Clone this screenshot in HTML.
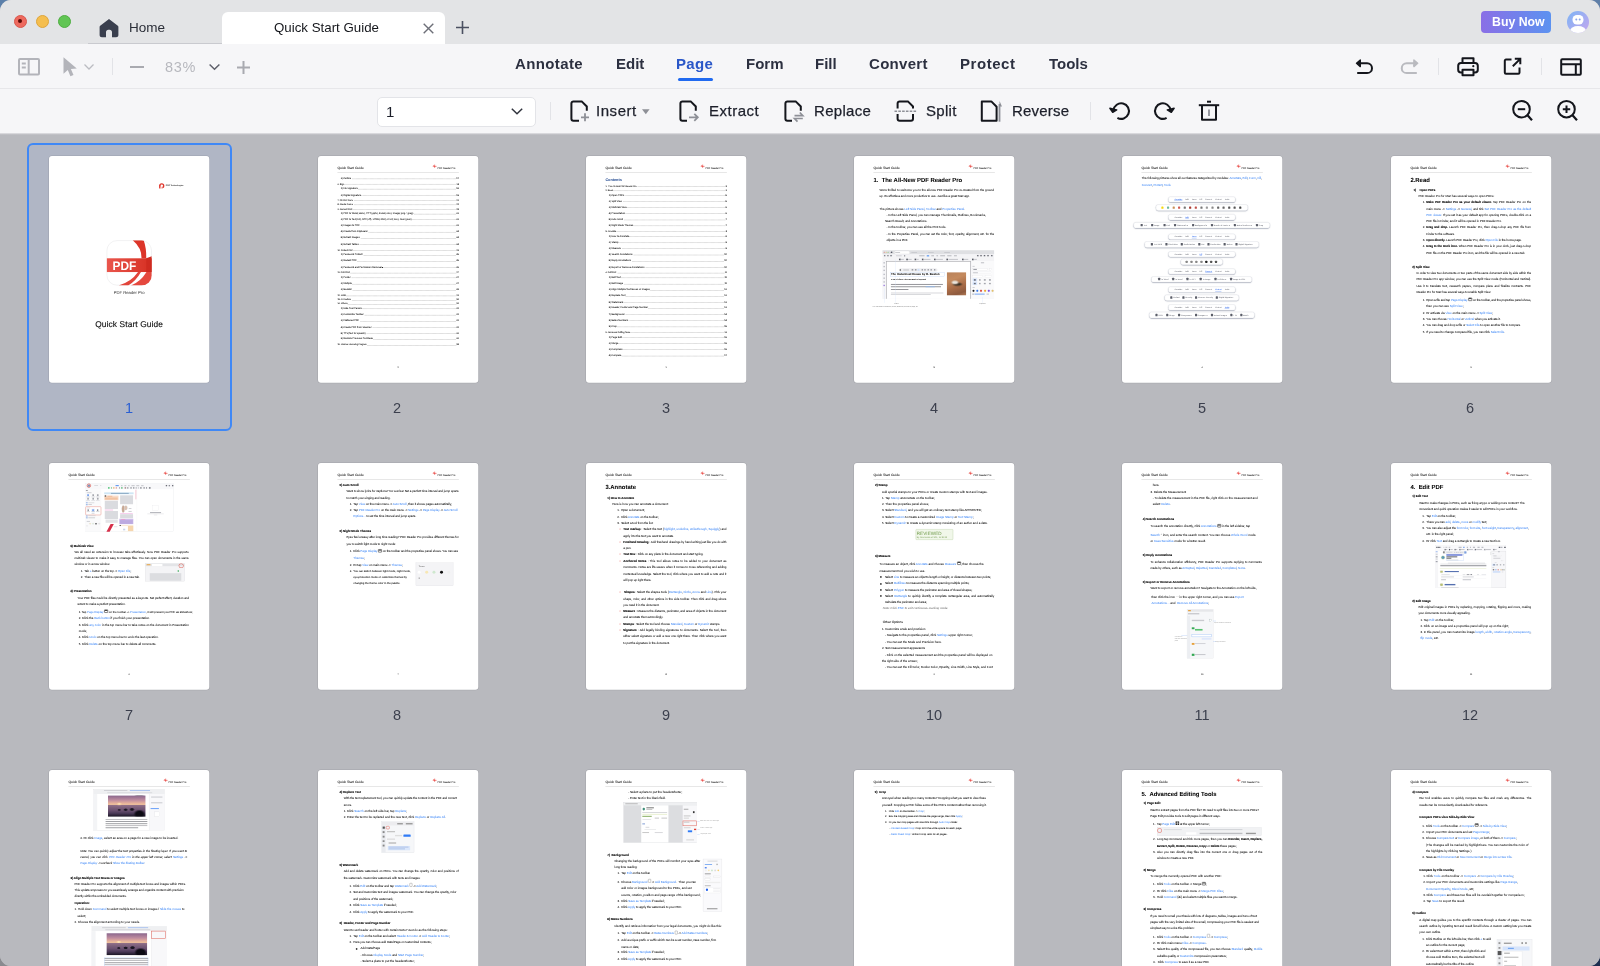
<!DOCTYPE html>
<html lang="en"><head><meta charset="utf-8"><title>Quick Start Guide - PDF Reader Pro</title>
<style>
*{box-sizing:border-box;margin:0;padding:0}
html,body{width:1600px;height:966px;overflow:hidden}
body{position:relative;background:#b8b9be;font-family:"Liberation Sans",sans-serif;color:#1e2230}
#win{position:absolute;left:0;top:0;width:1600px;height:966px;background:#b8b9be;border-radius:11px 11px 11px 11px;overflow:hidden}
.abs{position:absolute}
#titlebar{position:absolute;left:0;top:0;width:1600px;height:44px;background:#e3e4e6}
.tl{position:absolute;top:14.5px;width:13px;height:13px;border-radius:50%}
#tab{position:absolute;left:222px;top:12px;width:223px;height:32px;background:#fff;border-radius:6px 6px 0 0}
#tb1{position:absolute;left:0;top:44px;width:1600px;height:45px;background:#f6f6f8;border-bottom:1px solid #e7e7ea}
#tb2{position:absolute;left:0;top:89px;width:1600px;height:44px;background:#f6f6f8}
.t{position:absolute;white-space:nowrap;line-height:1;will-change:transform}
.menu{font-weight:bold;font-size:15px;color:#2c3040;top:55.5px}
.act{font-size:15px;color:#1c1f2a;top:103.5px;-webkit-text-stroke:.25px #1c1f2a}
.vd{position:absolute;width:1px;background:#e2e3e7}
svg{position:absolute;overflow:visible}
#content{position:absolute;left:0;top:133px;width:1600px;height:833px;background:#b8b9be;overflow:hidden}
#content:before{content:"";position:absolute;left:0;top:0;width:1600px;height:2px;background:linear-gradient(#e4e4e7,#b4b5ba)}
.num{position:absolute;width:160px;text-align:center;font-size:14.5px;color:#3b3f4d;line-height:1;will-change:transform}

.cell{position:absolute;width:160.3px;height:226.8px;will-change:transform}
.pg{position:absolute;left:0;top:0;width:595px;height:842px;transform:scale(.2694);transform-origin:0 0;background:#fff;border-radius:11px;overflow:hidden;font:11px/23.3px "Liberation Sans",sans-serif;color:#000;text-rendering:geometricPrecision;-webkit-text-stroke:.12px;box-shadow:0 0 0 2px rgba(90,92,100,.22)}
.pg *{position:absolute}
.pg b,.pg i,.pg a,.pg span.s{position:static}
.pg a{color:#4a8ff6}
.pg b,.pg .h2{-webkit-text-stroke:.4px}
.pg b a,.pg a b{-webkit-text-stroke:.4px #4a8ff6}
.hl{left:72px;top:37px;font-size:12.5px;color:#222;-webkit-text-stroke:.15px;line-height:12px;white-space:nowrap}
.hrr{right:85px;top:39px;font-size:9px;color:#222;-webkit-text-stroke:.15px;line-height:12px;white-space:nowrap}
.hic{right:154px;top:31px}
.rule{left:72px;top:61.5px;width:451px;height:1.8px;background:#a4a4a4}
.pn{left:0;width:595px;text-align:center;top:779px;font-size:8px;line-height:12px;color:#222}
.p{text-align:justify;white-space:normal;letter-spacing:-.16px}
.nw{white-space:nowrap}
.h1{font-weight:bold;font-size:22px;line-height:26px;white-space:nowrap;left:72px}
.h2{font-weight:bold;font-size:11px;white-space:nowrap}
.toc{display:flex;align-items:baseline;line-height:12px;white-space:nowrap}
.toc *{position:static}
.toc u{flex:1;text-decoration:none;border-bottom:1.2px dotted #222;margin:0 1px;height:9px}
.t1{font-size:8px;left:72px;width:451px}
.t2{font-size:9px;left:84px;width:439px}
.img{background:#f1f2f4;border:1px solid #d4d5d9}
.pill{background:#fff;border:1.2px solid #cfd1d8;border-radius:8px;box-shadow:0 2px 4px rgba(70,80,110,.5);display:flex;align-items:center;justify-content:space-evenly;font-size:7.3px;line-height:10px;color:#70737c;white-space:nowrap;padding:0 10px;-webkit-text-stroke:.1px}
.pill *{position:static}
.pg i.ic{display:inline-block;width:8px;height:9px;background:#5a5d68;border-radius:2px;margin-right:3px;vertical-align:-1.5px}
.pg .icd{display:inline-block;width:10px;height:13px;border:1.6px solid #444;border-radius:2px;position:relative;top:-3px}
.pg .icg{display:inline-block;width:13px;height:13px;position:relative;top:-3px;background:linear-gradient(#fff,#fff) 50% 0/2px 100% no-repeat,linear-gradient(#fff,#fff) 0 50%/100% 2px no-repeat,#222}
.pg .ico{display:inline-block;width:14px;height:12px;border:2px solid #222;border-radius:2px;position:relative;top:-3px;background:linear-gradient(#222,#222) 0 0/100% 3px no-repeat}
</style></head><body>
<div class="abs" style="left:0;top:0;width:20px;height:20px;background:#5c80aa"></div><div class="abs" style="right:0;top:0;width:20px;height:20px;background:#5f7fa8"></div><div class="abs" style="left:0;bottom:0;width:20px;height:20px;background:#898a8f"></div><div class="abs" style="right:0;bottom:0;width:20px;height:20px;background:linear-gradient(135deg,#6f7f9c,#1c2e50 60%)"></div>
<div id="win">
<div id="titlebar">
  <div class="tl" style="left:13.5px;background:#ee6a5f;border:.5px solid #d9574d"></div>
  <div class="abs" style="left:18px;top:19px;width:4px;height:4px;border-radius:50%;background:#5c0b06"></div>
  <div class="tl" style="left:35.7px;background:#f5be4f;border:.5px solid #dea53b"></div>
  <div class="tl" style="left:57.9px;background:#61c554;border:.5px solid #4fae42"></div>
  <div class="abs" style="left:88px;top:43px;width:134px;height:1px;background:#c9cacf"></div>
  <svg style="left:99px;top:19px" width="20" height="19" viewBox="0 0 20 19"><path d="M10 0 1.2 6.8c-.4.3-.6.7-.6 1.2V16c0 1.3 1 2.3 2.3 2.3H7V13c0-1.3 1-2.3 2.3-2.3h1.4c1.3 0 2.3 1 2.3 2.3v5.3h4.1c1.3 0 2.3-1 2.3-2.3V8c0-.5-.2-.9-.6-1.2Z" fill="#3a3f4e"/></svg>
  <div class="t" style="left:129.3px;top:20.7px;font-size:13.5px;color:#2b2e38">Home</div>
  <div id="tab"></div>
  <div class="t" style="left:273.7px;top:21.3px;font-size:13.3px;color:#15171c">Quick Start Guide</div>
  <svg style="left:423px;top:23px" width="11" height="11" viewBox="0 0 11 11"><path d="M.7.7l9.6 9.6M10.3.7.7 10.3" stroke="#6d6f78" stroke-width="1.4" fill="none"/></svg>
  <svg style="left:456px;top:21px" width="13" height="13" viewBox="0 0 13 13"><path d="M6.5 0v13M0 6.5h13" stroke="#4b5061" stroke-width="1.6" fill="none"/></svg>
  <div class="abs" style="left:1481px;top:11px;width:70px;height:22px;border-radius:4px;background:linear-gradient(90deg,#8a6fe6,#5c92f0)"></div>
  <div class="t" style="left:1491.7px;top:16.2px;font-size:12.3px;font-weight:bold;color:#fff">Buy Now</div>
  <svg style="left:1566.5px;top:11px" width="22" height="22" viewBox="0 0 22 22"><defs><linearGradient id="av" x1="0" y1="0" x2="1" y2="1"><stop offset="0" stop-color="#7db4f5"/><stop offset="1" stop-color="#c5a6ee"/></linearGradient><clipPath id="avc"><circle cx="11" cy="11" r="11"/></clipPath></defs><circle cx="11" cy="11" r="11" fill="url(#av)"/><g clip-path="url(#avc)"><rect x="5.5" y="4" width="11" height="9.5" rx="4.5" fill="#fff"/><ellipse cx="11" cy="20" rx="8" ry="5" fill="#fff"/><circle cx="9.3" cy="8.6" r="1" fill="#8aa5ee"/><circle cx="12.7" cy="8.6" r="1" fill="#8aa5ee"/></g></svg>
</div>
<div id="tb1">
  <!-- left tools -->
  <svg style="left:18px;top:14px" width="22" height="18" viewBox="0 0 22 18"><rect x="1" y="1" width="20" height="15.5" rx="1" fill="none" stroke="#b3b4ba" stroke-width="2"/><path d="M10.7 1v15.5" stroke="#b3b4ba" stroke-width="2"/><path d="M3.8 5.5h4M3.8 9.5h4" stroke="#b3b4ba" stroke-width="2"/></svg>
  <svg style="left:62.5px;top:13.3px" width="15" height="20" viewBox="0 0 15 20"><path d="M.5.3v16.4l4.3-3.6 2.6 6.2 3.1-1.3-2.6-6.1 5.9-.4Z" fill="#b3b4ba"/></svg>
  <svg style="left:84px;top:20px" width="10" height="6" viewBox="0 0 10 6"><path d="M.5.5 5 5 9.5.5" stroke="#bbbcc2" stroke-width="1.3" fill="none"/></svg>
  <div class="vd" style="left:112px;top:14px;height:17px"></div>
  <div class="abs" style="left:130px;top:21.8px;width:13.5px;height:2px;background:#a9aab0"></div>
  <div class="t" style="left:164.5px;top:16px;font-size:14.5px;letter-spacing:.7px;color:#b7b8be">83%</div>
  <svg style="left:209px;top:20px" width="11" height="6" viewBox="0 0 11 6"><path d="M.6.5 5.5 5.3 10.4.5" stroke="#5f616b" stroke-width="1.5" fill="none"/></svg>
  <svg style="left:236.5px;top:16.5px" width="13" height="13" viewBox="0 0 13 13"><path d="M6.5 0v13M0 6.5h13" stroke="#a9aab0" stroke-width="2" fill="none"/></svg>
  <!-- menu -->
  <div class="t menu" id="m1" style="left:514.5px;top:11.5px;letter-spacing:.38px">Annotate</div>
  <div class="t menu" id="m2" style="left:615.5px;top:11.5px">Edit</div>
  <div class="t menu" id="m3" style="left:676.3px;top:11.5px;color:#2a57c8;letter-spacing:.3px">Page</div>
  <div class="abs" style="left:677.5px;top:34px;width:35px;height:3px;border-radius:1.5px;background:#216af0"></div>
  <div class="t menu" id="m4" style="left:745.5px;top:11.5px">Form</div>
  <div class="t menu" id="m5" style="left:815px;top:11.5px">Fill</div>
  <div class="t menu" id="m6" style="left:868.5px;top:11.5px;letter-spacing:.3px">Convert</div>
  <div class="t menu" id="m7" style="left:960px;top:11.5px;letter-spacing:.55px">Protect</div>
  <div class="t menu" id="m8" style="left:1048.5px;top:11.5px">Tools</div>
  <!-- right tools -->
  <svg style="left:1355px;top:15px" width="19" height="16" viewBox="0 0 19 16"><path d="M2 4.3H12.1a4.9 4.9 0 0 1 0 9.8H2.2" stroke="#14161c" stroke-width="2" fill="none"/><path d="M5.3 1 1.5 4.3 5.3 7.6Z" fill="#14161c" stroke="#14161c" stroke-width="1.4" stroke-linejoin="round"/></svg>
  <svg style="left:1399.5px;top:15px" width="19" height="16" viewBox="0 0 19 16"><path d="M17 4.3H6.65a4.9 4.9 0 0 0 0 9.8H16.8" stroke="#b9babf" stroke-width="2" fill="none"/><path d="M13.9 1 17.7 4.3 13.9 7.6Z" fill="#b9babf" stroke="#b9babf" stroke-width="1.4" stroke-linejoin="round"/></svg>
  <div class="vd" style="left:1438px;top:14px;height:17px"></div>
  <svg style="left:1456.5px;top:13px" width="22" height="20" viewBox="0 0 22 20"><path d="M5.5 6V1.3h11V6" fill="none" stroke="#14161c" stroke-width="2" stroke-linejoin="round"/><rect x="1.2" y="6" width="19.6" height="9.5" rx="2.8" fill="none" stroke="#14161c" stroke-width="2"/><rect x="5.5" y="12.8" width="11" height="5.5" fill="#f6f6f8" stroke="#14161c" stroke-width="2" stroke-linejoin="round"/><circle cx="16.3" cy="9.2" r="1.1" fill="#14161c"/></svg>
  <svg style="left:1503px;top:13px" width="20" height="19" viewBox="0 0 20 19"><path d="M8.5 2.5H3a1.2 1.2 0 0 0-1.2 1.2V15.6a1.2 1.2 0 0 0 1.2 1.2H15.3a1.2 1.2 0 0 0 1.2-1.2V10.5" fill="none" stroke="#14161c" stroke-width="2"/><path d="M9.8 9.3 17 2.1M11.8 1.8h5.5v5.5" fill="none" stroke="#14161c" stroke-width="2"/></svg>
  <div class="vd" style="left:1541px;top:14px;height:17px"></div>
  <svg style="left:1560px;top:14px" width="22" height="18" viewBox="0 0 22 18"><rect x="1.2" y="1.2" width="19.6" height="15.6" rx="1" fill="none" stroke="#14161c" stroke-width="2"/><path d="M1.2 6.2h19.6M15.8 6.2v10.6" stroke="#14161c" stroke-width="2"/></svg>
</div>
<div id="tb2">
  <div class="abs" style="left:376.5px;top:7.5px;width:159px;height:30px;background:#fff;border:1px solid #e3e4e8;border-radius:5px"></div>
  <div class="t" style="left:386px;top:15px;font-size:15px;color:#1c1f2a">1</div>
  <svg style="left:511px;top:19px" width="12" height="7" viewBox="0 0 12 7"><path d="M.8.7 6 5.7 11.2.7" stroke="#30333d" stroke-width="1.5" fill="none"/></svg>
  <div class="vd" style="left:550px;top:13px;height:18px"></div>
  <!-- Insert -->
  <svg style="left:570px;top:11px" width="20" height="22" viewBox="0 0 20 22"><path d="M9 20.7H3.4a2 2 0 0 1-2-2V3.4a2 2 0 0 1 2-2h8.3l5.1 5.1v4.3" fill="none" stroke="#14161c" stroke-width="2"/><path d="M15 13.3v8M11 17.3h8" stroke="#8e9097" stroke-width="1.8"/></svg>
  <div class="t act" id="a1" style="left:595.7px;top:14px;letter-spacing:.55px">Insert</div>
  <svg style="left:642px;top:20px" width="8" height="6" viewBox="0 0 8 6"><path d="M0 .3h7.6L3.8 5.3Z" fill="#8e9097"/></svg>
  <!-- Extract -->
  <svg style="left:679px;top:11px" width="20" height="22" viewBox="0 0 20 22"><path d="M8 20.7H3.4a2 2 0 0 1-2-2V3.4a2 2 0 0 1 2-2h8.3l5.1 5.1v4.3" fill="none" stroke="#14161c" stroke-width="2"/><path d="M10 17.3h8.5M15.3 13.8l3.5 3.5-3.5 3.5" stroke="#8e9097" stroke-width="1.8" fill="none"/></svg>
  <div class="t act" id="a2" style="left:708.7px;top:14px;letter-spacing:.5px">Extract</div>
  <!-- Replace -->
  <svg style="left:784px;top:11px" width="20" height="22" viewBox="0 0 20 22"><path d="M8 20.7H3.4a2 2 0 0 1-2-2V3.4a2 2 0 0 1 2-2h8.3l5.1 5.1v4.3" fill="none" stroke="#14161c" stroke-width="2"/><path d="M10.5 15.7h8.3l-3-3.2M18.8 18.5h-8.3l3 3.2" stroke="#8e9097" stroke-width="1.7" fill="none"/></svg>
  <div class="t act" id="a3" style="left:813.7px;top:14px;letter-spacing:.3px">Replace</div>
  <!-- Split -->
  <svg style="left:894px;top:11px" width="23" height="22" viewBox="0 0 23 22"><path d="M3.6 8.5V3.4a2 2 0 0 1 2-2h8.3l5.1 5.1v2" fill="none" stroke="#14161c" stroke-width="2"/><path d="M3.6 14v4.7a2 2 0 0 0 2 2H17a2 2 0 0 0 2-2V14" fill="none" stroke="#14161c" stroke-width="2"/><path d="M.5 11.2h22" stroke="#8e9097" stroke-width="1.6" stroke-dasharray="2.6 1.2"/></svg>
  <div class="t act" id="a4" style="left:926px;top:14px;letter-spacing:.3px">Split</div>
  <!-- Reverse -->
  <svg style="left:980px;top:11px" width="23" height="22" viewBox="0 0 23 22"><path d="M1.8 1.4h9.5l5.3 5.3v14H1.8Z" fill="none" stroke="#14161c" stroke-width="2" stroke-linejoin="round"/><path d="M19.5 21.7V4" stroke="#8e9097" stroke-width="1.8"/><path d="M19.5 1 22 6.5h-2.5Z" fill="#8e9097"/></svg>
  <div class="t act" id="a5" style="left:1012.3px;top:14px;letter-spacing:.2px">Reverse</div>
  <div class="vd" style="left:1090px;top:13px;height:18px"></div>
  <!-- rotate left -->
  <svg style="left:1104px;top:9px" width="32" height="26" viewBox="0 0 32 26"><path d="M9.49 12.29A7.75 7.75 0 1 1 13.4 19.85" fill="none" stroke="#14161c" stroke-width="2.1"/><path d="M5.9 10.3 8.7 14.3 12.7 11.9Z" fill="#14161c" stroke="#14161c" stroke-width="1.5" stroke-linejoin="round"/></svg>
  <svg style="left:1148.2px;top:9px" width="32" height="26" viewBox="0 0 32 26"><g transform="translate(32 0) scale(-1 1)"><path d="M9.49 12.29A7.75 7.75 0 1 1 13.4 19.85" fill="none" stroke="#14161c" stroke-width="2.1"/><path d="M5.9 10.3 8.7 14.3 12.7 11.9Z" fill="#14161c" stroke="#14161c" stroke-width="1.5" stroke-linejoin="round"/></g></svg>
  <!-- trash -->
  <svg style="left:1198px;top:10px" width="22" height="23" viewBox="0 0 22 23"><path d="M.8 6.2h20.4" stroke="#14161c" stroke-width="2"/><path d="M9 2.7h4" stroke="#14161c" stroke-width="2"/><path d="M4 6.2v14.5h14V6.2" fill="none" stroke="#14161c" stroke-width="2" stroke-linejoin="round"/><path d="M11 10.5v6.5" stroke="#8e9097" stroke-width="1.8"/></svg>
  <!-- zoom out / in -->
  <svg style="left:1511px;top:10px" width="22" height="23" viewBox="0 0 22 23"><circle cx="10.5" cy="10.2" r="8.3" fill="none" stroke="#14161c" stroke-width="2"/><path d="M16.5 16.2l4.5 5" stroke="#14161c" stroke-width="2.2"/><path d="M6.8 10.2h7.4" stroke="#14161c" stroke-width="2"/></svg>
  <svg style="left:1555.5px;top:10px" width="22" height="23" viewBox="0 0 22 23"><circle cx="10.5" cy="10.2" r="8.3" fill="none" stroke="#14161c" stroke-width="2"/><path d="M16.5 16.2l4.5 5" stroke="#14161c" stroke-width="2.2"/><path d="M6.8 10.2h7.4M10.5 6.5v7.4" stroke="#14161c" stroke-width="2"/></svg>
</div>
<div id="content">
<div style="position:absolute;left:27px;top:9.5px;width:205px;height:288px;border:2px solid #3f88f6;border-radius:6px;background:#b0b6c5"></div>
<div class="cell" style="left:49.3px;top:22.7px"><div class="pg"><svg style="left:407px;top:101px" width="23" height="20" viewBox="0 0 23 20"><circle cx="11.5" cy="9.5" r="7.3" fill="none" stroke="#e0362c" stroke-width="5"/><rect x="0" y="11" width="9" height="9" fill="#fff"/><rect x="1.7" y="8" width="5" height="11.5" fill="#e0362c"/><rect x="9" y="15" width="5" height="5" fill="#fff"/></svg><div class="nw" style="left:433.5px;top:105px;font-size:7.6px;line-height:12px;font-weight:bold;color:#333;-webkit-text-stroke:0">PDF Technologies</div><svg style="left:213.8px;top:313.3px" width="167.5" height="167.5" viewBox="0 0 640 640"><defs><clipPath id="lg"><rect x="0" y="0" width="640" height="640" rx="145"/></clipPath><linearGradient id="bd" x1="0" y1="0" x2="1" y2="0"><stop offset="0" stop-color="#ea564d"/><stop offset="1" stop-color="#d62f22"/></linearGradient></defs><rect x="4" y="4" width="632" height="632" rx="142" fill="#fff" stroke="#e7e7e9" stroke-width="8"/><g clip-path="url(#lg)"><path d="M370 0Q500 110 495 258L562 258Q565 110 525 0Z" fill="#dc3529"/><rect x="0" y="255" width="640" height="195" fill="url(#bd)"/><path d="M562 255 640 225V450H562Z" fill="#cf2b20"/><path d="M445 450H487Q410 585 305 640H170Q350 590 445 450Z" fill="#e2443a"/><path d="M565 450H640V540Q625 640 500 640H345Q480 590 565 450Z" fill="#e5483e"/></g><text x="84" y="415" font-family="Liberation Sans, sans-serif" font-weight="bold" font-size="176" fill="#fff" textLength="336" lengthAdjust="spacingAndGlyphs">PDF</text></svg><div class="nw" style="left:0;width:595px;text-align:center;top:501px;font-size:15.5px;line-height:16px;color:#333;-webkit-text-stroke:0">PDF Reader Pro</div><div class="nw" style="left:0;width:595px;text-align:center;top:608px;font-size:31px;line-height:36px;color:#111;letter-spacing:.45px;-webkit-text-stroke:.5px #111">Quick Start Guide</div></div></div>
<div class="num" style="left:49.3px;margin-left:-.2px;top:267.7px;color:#2a5fd3">1</div>
<div class="cell" style="left:317.55px;top:22.7px"><div class="pg"><div class="hl">Quick Start Guide</div><svg class="hic" width="16" height="16" viewBox="0 0 16 16"><path d="M1 7.5h14M8 1v12" stroke="#e5322d" stroke-width="2.2" fill="none"/><path d="M8 7.5 2 3" stroke="#e5322d" stroke-width="1.5"/></svg><div class="hrr">PDF Reader Pro</div><div class="rule"></div><div class="pn">2</div><div class="toc t2" style="top:75.5px"><span>3) Outline</span><u></u><span>17</span></div><div class="toc t1" style="top:96.7px"><span>6. Sign</span><u></u><span>18</span></div><div class="toc t2" style="top:115.1px"><span>1) Ink Signature</span><u></u><span>18</span></div><div class="toc t2" style="top:138.1px"><span>2) Digital Signature</span><u></u><span>19</span></div><div class="toc t1" style="top:158.4px"><span>7. Fill PDF Form</span><u></u><span>21</span></div><div class="toc t1" style="top:173.1px"><span>8. Create Forms</span><u></u><span>22</span></div><div class="toc t1" style="top:190.6px"><span>9. Convert PDF</span><u></u><span>23</span></div><div class="toc t2" style="top:207.2px"><span>1) PDF to Word(.docx), PPT(.pptx), Excel(.xlsx), Image(.png / .jpeg)</span><u></u><span>23</span></div><div class="toc t2" style="top:228.4px"><span>2) PDF to Text(.txt), RTF(.rtf), HTML(.html), CSV(.csv), Json(.json)</span><u></u><span>23</span></div><div class="toc t2" style="top:251.4px"><span>3) Images to PDF</span><u></u><span>23</span></div><div class="toc t2" style="top:274.4px"><span>4) Create from Clipboard</span><u></u><span>24</span></div><div class="toc t2" style="top:297.4px"><span>5) Extract Images</span><u></u><span>24</span></div><div class="toc t2" style="top:320.5px"><span>6) Extract Tables</span><u></u><span>24</span></div><div class="toc t1" style="top:341.6px"><span>10. Protect PDF</span><u></u><span>25</span></div><div class="toc t2" style="top:360.1px"><span>1) Password Protect</span><u></u><span>25</span></div><div class="toc t2" style="top:382.2px"><span>2) Redact PDF</span><u></u><span>25</span></div><div class="toc t2" style="top:405.2px"><span>3) Password and Permission Removal</span><u></u><span>26</span></div><div class="toc t1" style="top:426.4px"><span>11. Print PDF</span><u></u><span>27</span></div><div class="toc t2" style="top:443.9px"><span>1) Poster</span><u></u><span>27</span></div><div class="toc t2" style="top:466.9px"><span>2) Multiple</span><u></u><span>27</span></div><div class="toc t2" style="top:489.9px"><span>3) Booklet</span><u></u><span>28</span></div><div class="toc t1" style="top:511.1px"><span>12. OCR</span><u></u><span>29</span></div><div class="toc t1" style="top:526.8px"><span>13. AI Feature</span><u></u><span>30</span></div><div class="toc t1" style="top:542.4px"><span>14. Others</span><u></u><span>31</span></div><div class="toc t2" style="top:559.0px"><span>1) Hide Tool Panels</span><u></u><span>31</span></div><div class="toc t2" style="top:582.0px"><span>2) Customize Toolbar</span><u></u><span>31</span></div><div class="toc t2" style="top:605.0px"><span>3) Flattened PDF</span><u></u><span>31</span></div><div class="toc t2" style="top:628.1px"><span>4) Create PDF from Scanner</span><u></u><span>31</span></div><div class="toc t2" style="top:651.1px"><span>5) TTS(Text to Speech)</span><u></u><span>32</span></div><div class="toc t2" style="top:672.3px"><span>6) Restore Previous Purchase</span><u></u><span>32</span></div><div class="toc t1" style="top:694.4px"><span>15. Volume Licensing Program</span><u></u><span>33</span></div></div></div>
<div class="num" style="left:317.55px;margin-left:-.2px;top:267.7px;color:#3b3f4d">2</div>
<div class="cell" style="left:585.8px;top:22.7px"><div class="pg"><div class="hl">Quick Start Guide</div><svg class="hic" width="16" height="16" viewBox="0 0 16 16"><path d="M1 7.5h14M8 1v12" stroke="#e5322d" stroke-width="2.2" fill="none"/><path d="M8 7.5 2 3" stroke="#e5322d" stroke-width="1.5"/></svg><div class="hrr">PDF Reader Pro</div><div class="rule"></div><div class="pn">1</div><div class="nw" style="left:72px;top:79.4px;font-size:14px;line-height:18px;color:#2f5597;font-weight:bold">Contents</div><div class="toc t1" style="top:105.9px"><span>1.&nbsp; The All-New PDF Reader Pro</span><u></u><span>3</span></div><div class="toc t1" style="top:120.6px"><span>2. Read</span><u></u><span>5</span></div><div class="toc t2" style="top:139.0px"><span>1) Open PDFs</span><u></u><span>5</span></div><div class="toc t2" style="top:161.1px"><span>2) Split View</span><u></u><span>5</span></div><div class="toc t2" style="top:184.1px"><span>3) Multi-tab View</span><u></u><span>6</span></div><div class="toc t2" style="top:206.3px"><span>4) Presentation</span><u></u><span>6</span></div><div class="toc t2" style="top:229.3px"><span>5) Auto Scroll</span><u></u><span>7</span></div><div class="toc t2" style="top:251.4px"><span>6) Night Mode Themes</span><u></u><span>7</span></div><div class="toc t1" style="top:272.6px"><span>3. Annotate</span><u></u><span>8</span></div><div class="toc t2" style="top:291.0px"><span>1) How to Annotate</span><u></u><span>8</span></div><div class="toc t2" style="top:314.0px"><span>2) Stamp</span><u></u><span>9</span></div><div class="toc t2" style="top:336.1px"><span>3) Measure</span><u></u><span>9</span></div><div class="toc t2" style="top:359.1px"><span>4) Search Annotations</span><u></u><span>10</span></div><div class="toc t2" style="top:382.2px"><span>5) Reply Annotations</span><u></u><span>10</span></div><div class="toc t2" style="top:405.2px"><span>6) Export or Remove Annotations</span><u></u><span>10</span></div><div class="toc t1" style="top:426.4px"><span>4. Edit PDF</span><u></u><span>11</span></div><div class="toc t2" style="top:443.9px"><span>1) Edit Text</span><u></u><span>11</span></div><div class="toc t2" style="top:466.9px"><span>2) Edit Image</span><u></u><span>11</span></div><div class="toc t2" style="top:489.9px"><span>3) Align Multiple Text Boxes or Images</span><u></u><span>12</span></div><div class="toc t2" style="top:512.0px"><span>4) Replace Text</span><u></u><span>12</span></div><div class="toc t2" style="top:535.0px"><span>5) Watermark</span><u></u><span>13</span></div><div class="toc t2" style="top:557.2px"><span>6) Header, Footer and Page Number</span><u></u><span>13</span></div><div class="toc t2" style="top:580.2px"><span>7) Background</span><u></u><span>14</span></div><div class="toc t2" style="top:603.2px"><span>8) Bates Numbers</span><u></u><span>14</span></div><div class="toc t2" style="top:626.2px"><span>9) Crop</span><u></u><span>15</span></div><div class="toc t1" style="top:647.4px"><span>5. Advanced Editing Tools</span><u></u><span>16</span></div><div class="toc t2" style="top:664.9px"><span>1) Page Edit</span><u></u><span>16</span></div><div class="toc t2" style="top:687.9px"><span>2) Merge</span><u></u><span>16</span></div><div class="toc t2" style="top:711.0px"><span>3) Compress</span><u></u><span>16</span></div><div class="toc t2" style="top:734.0px"><span>4) Compare</span><u></u><span>17</span></div></div></div>
<div class="num" style="left:585.8px;margin-left:-.2px;top:267.7px;color:#3b3f4d">3</div>
<div class="cell" style="left:854.05px;top:22.7px"><div class="pg"><div class="hl">Quick Start Guide</div><svg class="hic" width="16" height="16" viewBox="0 0 16 16"><path d="M1 7.5h14M8 1v12" stroke="#e5322d" stroke-width="2.2" fill="none"/><path d="M8 7.5 2 3" stroke="#e5322d" stroke-width="1.5"/></svg><div class="hrr">PDF Reader Pro</div><div class="rule"></div><div class="pn">3</div><div class="h1" style="top:76.3px">1.&nbsp; The All-New PDF Reader Pro</div><div class="p" style="left:94.5px;top:114.5px;width:425.5px;">We're thrilled to welcome you to the all-new PDF Reader Pro re-created from the ground up. It's effortless and more productive to use. Just like a great Mac app.</div><div class="nw" style="left:94.5px;top:185.4px;">The picture shows <a>Left Side Panel</a>, <a>Toolbar</a> and <a>Properties Panel</a>.</div><div class="nw" style="left:120.3px;top:208.5px;">- In the Left Side Panel, you can manage Thumbnails, Outlines, Bookmarks,</div><div class="nw" style="left:114.8px;top:231.5px;">Search Result, and Annotations.</div><div class="nw" style="left:120.3px;top:254.5px;">- In the toolbar, you can use all the PDF tools.</div><div class="p" style="left:120.3px;top:277.5px;width:399.7px;">- In the Properties Panel, you can set the color, font, opacity, alignment, etc. for the objects in a PDF.</div><div class="img" style="left:105.7px;top:350.3px;width:414.0px;height:180.0px;background:#f4f4f6;border:0"></div><div class="img" style="left:105.7px;top:350.3px;width:414.0px;height:14.2px;background:#dfe0e3;border:0"></div><div class="img" style="left:109.7px;top:354.8px;width:5.4px;height:5.4px;background:#ee6a5f;border-radius:50%"></div><div class="img" style="left:116.9px;top:354.8px;width:5.4px;height:5.4px;background:#f5be4f;border-radius:50%"></div><div class="img" style="left:124.1px;top:354.8px;width:5.4px;height:5.4px;background:#61c554;border-radius:50%"></div><div class="img" style="left:135.9px;top:354.2px;width:6.9px;height:7.2px;background:#3a3f4e;border-radius:3px"></div><div class="img" style="left:149.5px;top:352.4px;width:57.3px;height:12.1px;background:#fff;border-radius:5px 5px 0 0"></div><div class="img" style="left:153.1px;top:356.9px;width:17.5px;height:2.7px;background:#c2c3c8;border:0"></div><div class="img" style="left:212.8px;top:356.6px;width:21.1px;height:3.0px;background:#c5c6cb;border:0"></div><div class="img" style="left:274.6px;top:356.6px;width:21.1px;height:3.0px;background:#c5c6cb;border:0"></div><div class="img" style="left:334.9px;top:356.6px;width:21.1px;height:3.0px;background:#c5c6cb;border:0"></div><div class="img" style="left:110.9px;top:366.9px;width:6.6px;height:6.6px;background:#5a5d68;border-radius:2px"></div><div class="img" style="left:122.9px;top:366.9px;width:6.6px;height:6.6px;background:#5a5d68;border-radius:2px"></div><div class="img" style="left:134.4px;top:366.9px;width:6.6px;height:6.6px;background:#5a5d68;border-radius:2px"></div><div class="img" style="left:155.5px;top:368.7px;width:21.1px;height:3.3px;background:#c9cacf;border:0"></div><div class="img" style="left:185.7px;top:367.5px;width:4.2px;height:5.4px;background:#8a8c94;border:0"></div><div class="img" style="left:242.3px;top:368.7px;width:20.2px;height:3.6px;background:#a9abb2;border:0"></div><div class="img" style="left:286.7px;top:368.7px;width:10.6px;height:3.6px;background:#a9abb2;border:0"></div><div class="img" style="left:306.3px;top:368.7px;width:6.0px;height:3.6px;background:#a9abb2;border:0"></div><div class="img" style="left:319.8px;top:368.7px;width:18.1px;height:3.6px;background:#a9abb2;border:0"></div><div class="img" style="left:345.5px;top:368.7px;width:16.6px;height:3.6px;background:#a9abb2;border:0"></div><div class="img" style="left:371.1px;top:368.7px;width:10.6px;height:3.6px;background:#a9abb2;border:0"></div><div class="img" style="left:269.5px;top:368.1px;width:9.6px;height:4.8px;background:#6aa0f0;border:0"></div><div class="img" style="left:455.5px;top:366.9px;width:7.2px;height:6.6px;background:#4a4d58;border-radius:2px"></div><div class="img" style="left:467.6px;top:366.9px;width:7.2px;height:6.6px;background:#4a4d58;border-radius:2px"></div><div class="img" style="left:481.2px;top:366.9px;width:7.2px;height:6.6px;background:#4a4d58;border-radius:2px"></div><div class="img" style="left:493.8px;top:366.9px;width:7.2px;height:6.6px;background:#4a4d58;border-radius:2px"></div><div class="img" style="left:507.7px;top:366.9px;width:7.2px;height:6.6px;background:#4a4d58;border-radius:2px"></div><div class="img" style="left:167.0px;top:380.5px;width:6.0px;height:6.0px;background:#555862;border:0"></div><div class="img" style="left:174.2px;top:382.0px;width:10.9px;height:3.3px;background:#b9bac0;border:0"></div><div class="img" style="left:194.1px;top:380.5px;width:6.0px;height:6.0px;background:#555862;border:0"></div><div class="img" style="left:201.3px;top:382.0px;width:13.0px;height:3.3px;background:#b9bac0;border:0"></div><div class="img" style="left:224.9px;top:380.5px;width:6.0px;height:6.0px;background:#555862;border:0"></div><div class="img" style="left:232.1px;top:382.0px;width:7.8px;height:3.3px;background:#b9bac0;border:0"></div><div class="img" style="left:252.0px;top:380.5px;width:6.0px;height:6.0px;background:#555862;border:0"></div><div class="img" style="left:259.2px;top:382.0px;width:24.4px;height:3.3px;background:#b9bac0;border:0"></div><div class="img" style="left:296.6px;top:380.5px;width:6.0px;height:6.0px;background:#555862;border:0"></div><div class="img" style="left:303.9px;top:382.0px;width:26.5px;height:3.3px;background:#b9bac0;border:0"></div><div class="img" style="left:343.4px;top:380.5px;width:6.0px;height:6.0px;background:#555862;border:0"></div><div class="img" style="left:350.6px;top:382.0px;width:35.6px;height:3.3px;background:#b9bac0;border:0"></div><div class="img" style="left:400.6px;top:380.5px;width:6.0px;height:6.0px;background:#555862;border:0"></div><div class="img" style="left:407.9px;top:382.0px;width:16.0px;height:3.3px;background:#b9bac0;border:0"></div><div class="img" style="left:438.3px;top:380.5px;width:6.0px;height:6.0px;background:#555862;border:0"></div><div class="img" style="left:445.6px;top:382.0px;width:10.9px;height:3.3px;background:#b9bac0;border:0"></div><div class="img" style="left:105.7px;top:389.5px;width:13.6px;height:140.8px;background:#f6f6f8;border:0"></div><div class="img" style="left:109.1px;top:394.0px;width:6.0px;height:4.8px;background:#c0c2c9;border:0"></div><div class="img" style="left:109.1px;top:408.2px;width:6.0px;height:4.8px;background:#c0c2c9;border:0"></div><div class="img" style="left:109.1px;top:422.4px;width:6.0px;height:4.8px;background:#c0c2c9;border:0"></div><div class="img" style="left:109.1px;top:436.8px;width:6.0px;height:4.8px;background:#c0c2c9;border:0"></div><div class="img" style="left:109.1px;top:451.0px;width:6.0px;height:4.8px;background:#c0c2c9;border:0"></div><div class="img" style="left:109.1px;top:464.9px;width:6.0px;height:4.8px;background:#c0c2c9;border:0"></div><div class="img" style="left:109.1px;top:477.6px;width:6.0px;height:5.4px;background:#a78be0;border:0"></div><div class="img" style="left:119.3px;top:390.4px;width:314.2px;height:139.9px;background:#fff;border:2px solid #9a9ba0;border-bottom:0"></div><div class="img" style="left:435.9px;top:389.5px;width:83.8px;height:140.8px;background:#fafafb;border:0"></div><div class="img" style="left:167.6px;top:417.5px;width:141.7px;height:10.3px;background:#f3f3f5;border-radius:4px"></div><div class="img" style="left:169.4px;top:419.7px;width:6.0px;height:6.0px;background:#111;border-radius:50%"></div><div class="img" style="left:182.6px;top:421.2px;width:21.1px;height:3.6px;background:#c5c6cb;border:0"></div><div class="img" style="left:214.3px;top:420.3px;width:5.4px;height:5.1px;background:#8f9199;border:0"></div><div class="img" style="left:226.4px;top:420.3px;width:5.4px;height:5.1px;background:#8f9199;border:0"></div><div class="img" style="left:250.5px;top:420.3px;width:5.4px;height:5.1px;background:#8f9199;border:0"></div><div class="img" style="left:261.0px;top:420.3px;width:5.4px;height:5.1px;background:#8f9199;border:0"></div><div class="img" style="left:273.1px;top:420.3px;width:5.4px;height:5.1px;background:#8f9199;border:0"></div><div class="img" style="left:283.7px;top:420.3px;width:5.4px;height:5.1px;background:#8f9199;border:0"></div><div class="img" style="left:296.6px;top:420.3px;width:5.4px;height:5.1px;background:#8f9199;border:0"></div><div class="img" style="left:236.3px;top:419.1px;width:7.2px;height:7.5px;background:#cfe0fb;border:0"></div><div class="img" style="left:135.9px;top:431.7px;width:199.9px;height:17.2px;background:none;border:1px solid #a9c6f5"></div><div class="nw" style="left:137.4px;top:428.5px;font-weight:bold;font-size:10.7px;">The Outermost House by H. Beston</div><div class="nw" style="left:137.4px;top:447.5px;font-weight:bold;font-size:5.8px;">A Year of Life On The Great Beach of Cape Cod</div><div class="img" style="left:137.4px;top:474.8px;width:193.0px;height:3.0px;background:#7d7e84;border:0"></div><div class="img" style="left:137.4px;top:483.9px;width:185.4px;height:3.0px;background:#7d7e84;border:0"></div><div class="img" style="left:137.4px;top:493.5px;width:64.8px;height:3.0px;background:#7d7e84;border:0"></div><div class="img" style="left:137.4px;top:507.1px;width:194.5px;height:3.0px;background:#cfd0d4;border:0"></div><div class="img" style="left:137.4px;top:512.5px;width:147.8px;height:3.0px;background:#cfd0d4;border:0"></div><div class="img" style="left:265.6px;top:483.6px;width:34.7px;height:3.6px;background:#8db8f0;border:0"></div><div class="img" style="left:344.9px;top:431.7px;width:71.5px;height:85.3px;background:radial-gradient(ellipse 22% 10% at 42% 44%,#e9e4dc 0,#e9e4dc 50%,rgba(233,228,220,0) 100%),radial-gradient(ellipse 30% 9% at 55% 52%,#3f3326 0,#3f3326 50%,rgba(63,51,38,0) 100%),linear-gradient(160deg,#b9825a,#c48a5e 30%,#a96c47 60%,#8e5a3e 85%,#b07a55);border:0"></div><div class="img" style="left:470.6px;top:394.9px;width:12.1px;height:3.0px;background:#aeb0b7;border:0"></div><div class="img" style="left:439.5px;top:407.6px;width:8.4px;height:3.0px;background:#c5c6cb;border:0"></div><div class="img" style="left:439.5px;top:416.6px;width:55.2px;height:9.0px;background:#fff;border:1px solid #dcdde1"></div><div class="img" style="left:442.6px;top:419.4px;width:13.0px;height:3.6px;background:#9a9ca4;border:0"></div><div class="img" style="left:502.3px;top:416.6px;width:9.6px;height:9.0px;background:#fff;border:1px solid #dcdde1"></div><div class="img" style="left:439.5px;top:430.2px;width:72.4px;height:6.6px;background:#fff;border:1px solid #e3e4e8"></div><div class="img" style="left:442.0px;top:432.0px;width:18.1px;height:3.0px;background:#b9bac0;border:0"></div><div class="img" style="left:439.5px;top:443.8px;width:38.6px;height:7.5px;background:#fff;border:1px solid #e3e4e8"></div><div class="img" style="left:485.7px;top:443.8px;width:26.2px;height:7.5px;background:#fff;border:1px solid #e3e4e8"></div><div class="img" style="left:439.5px;top:454.3px;width:17.5px;height:11.5px;background:#d6e4fb;border:0"></div><div class="img" style="left:445.0px;top:457.4px;width:6.6px;height:5.4px;background:#6b6e78;border:0"></div><div class="img" style="left:463.7px;top:457.4px;width:6.6px;height:5.4px;background:#a5a7ae;border:0"></div><div class="img" style="left:482.4px;top:457.4px;width:6.6px;height:5.4px;background:#a5a7ae;border:0"></div><div class="img" style="left:501.1px;top:457.4px;width:6.6px;height:5.4px;background:#a5a7ae;border:0"></div><div class="img" style="left:439.5px;top:467.6px;width:17.5px;height:11.5px;background:#d6e4fb;border:0"></div><div class="img" style="left:445.0px;top:470.6px;width:6.6px;height:5.4px;background:#6b6e78;border:0"></div><div class="img" style="left:463.7px;top:470.6px;width:6.6px;height:5.4px;background:#a5a7ae;border:0"></div><div class="img" style="left:482.4px;top:470.6px;width:6.6px;height:5.4px;background:#a5a7ae;border:0"></div><div class="img" style="left:501.1px;top:470.6px;width:6.6px;height:5.4px;background:#a5a7ae;border:0"></div><div class="img" style="left:439.5px;top:486.9px;width:8.4px;height:3.0px;background:#c5c6cb;border:0"></div><div class="img" style="left:438.9px;top:495.9px;width:9.0px;height:9.0px;background:#111;border-radius:50%"></div><div class="img" style="left:453.1px;top:495.9px;width:9.0px;height:9.0px;background:#1f6bf0;border-radius:50%"></div><div class="img" style="left:467.3px;top:495.9px;width:9.0px;height:9.0px;background:#e0281e;border-radius:50%"></div><div class="img" style="left:481.5px;top:495.9px;width:9.0px;height:9.0px;background:#f59e0b;border-radius:50%"></div><div class="img" style="left:495.6px;top:495.9px;width:9.0px;height:9.0px;background:#6b32e8;border-radius:50%"></div><div class="img" style="left:509.8px;top:495.9px;width:9.0px;height:9.0px;background:#e8c060;border-radius:50%"></div><div class="img" style="left:438.9px;top:510.4px;width:6.0px;height:6.0px;background:#c5c6cb;border:0"></div><div class="img" style="left:447.4px;top:510.4px;width:37.4px;height:6.0px;background:#a9c6f5;border:0"></div><div class="img" style="left:491.7px;top:510.4px;width:9.0px;height:6.0px;background:#d5d6da;border:0"></div><div class="img" style="left:111.8px;top:490.5px;width:0.9px;height:54.9px;background:#d3e2fa;border:0"></div><div class="img" style="left:153.4px;top:385.0px;width:0.9px;height:160.4px;background:#d3e2fa;border:0"></div><div class="img" style="left:475.7px;top:523.1px;width:0.9px;height:22.3px;background:#d3e2fa;border:0"></div><div class="nw" style="left:148.0px;top:536.5px;font-size:5.5px;color:#666;-webkit-text-stroke:0;">Toolbar</div><div class="nw" style="left:464.0px;top:536.5px;font-size:5.5px;color:#666;-webkit-text-stroke:0;">Properties</div><div class="nw" style="left:69.6px;top:547.3px;font-size:5.3px;color:#666;-webkit-text-stroke:0;">Left Side Panel / Thumbnails, Outline, Bookmark, Annotation, Page, etc</div></div></div>
<div class="num" style="left:854.05px;margin-left:-.2px;top:267.7px;color:#3b3f4d">4</div>
<div class="cell" style="left:1122.3px;top:22.7px"><div class="pg"><div class="hl">Quick Start Guide</div><svg class="hic" width="16" height="16" viewBox="0 0 16 16"><path d="M1 7.5h14M8 1v12" stroke="#e5322d" stroke-width="2.2" fill="none"/><path d="M8 7.5 2 3" stroke="#e5322d" stroke-width="1.5"/></svg><div class="hrr">PDF Reader Pro</div><div class="rule"></div><div class="pn">4</div><div class="p" style="left:73.3px;top:73.1px;width:445.8px;">The following pictures show all our features categorized by modules: <a>Annotate</a>, <a>Edit</a>, <a>Form</a>, <a>Fill</a>, <a>Convert</a>, <a>Protect</a>, <a>Tools</a></div><div class="pill" style="left:171.9px;top:151.0px;width:248.7px;height:21.2px;"><span class="s" style="color:#2563eb;border-bottom:1.5px solid #2563eb">Annotate</span><span class="s">Edit</span><span class="s">Form</span><span class="s">Fill</span><span class="s">Convert</span><span class="s">Protect</span><span class="s">Tools</span></div><div class="pill" style="left:125.8px;top:179.6px;width:340.8px;height:23.0px;"><i class="ic" style="background:#f5d90a;width:8px;height:9px"></i><i class="ic" style="background:#6fb8a0;width:8px;height:9px"></i><i class="ic" style="background:#c89058;width:8px;height:9px"></i><i class="ic" style="background:#d05a50;width:8px;height:9px"></i><i class="ic" style="background:#777;width:8px;height:9px"></i><i class="ic" style="background:#a83a30;width:8px;height:9px"></i><i class="ic" style="background:#c0504a;width:8px;height:9px"></i><i class="ic" style="background:#777;width:8px;height:9px"></i><i class="ic" style="background:#999;width:8px;height:9px"></i><i class="ic" style="background:#888;width:8px;height:9px"></i><i class="ic" style="background:#666;width:8px;height:9px"></i><i class="ic" style="background:#666;width:8px;height:9px"></i><i class="ic" style="background:#555;width:8px;height:9px"></i><i class="ic" style="background:#555;width:8px;height:9px"></i><i class="ic" style="background:#444;width:8px;height:9px"></i></div><div class="pill" style="left:171.9px;top:216.4px;width:248.7px;height:22.1px;"><span class="s">Annotate</span><span class="s" style="color:#2563eb;border-bottom:1.5px solid #2563eb">Edit</span><span class="s">Form</span><span class="s">Fill</span><span class="s">Convert</span><span class="s">Protect</span><span class="s">Tools</span></div><div class="pill" style="left:42.9px;top:245.9px;width:506.6px;height:22.1px;"><span class="s"><i class="ic"></i>Text</span><span class="s"><i class="ic"></i>Image</span><span class="s"><i class="ic"></i>Link</span><span class="s"><i class="ic"></i>Watermark &#9662;</span><span class="s"><i class="ic"></i>Background &#9662;</span><span class="s"><i class="ic"></i>Header &amp; Footer &#9662;</span><span class="s"><i class="ic"></i>Bates Numbers &#9662;</span><span class="s"><i class="ic"></i>Crop</span></div><div class="pill" style="left:171.9px;top:289.2px;width:248.7px;height:21.2px;"><span class="s">Annotate</span><span class="s">Edit</span><span class="s" style="color:#2563eb;border-bottom:1.5px solid #2563eb">Form</span><span class="s">Fill</span><span class="s">Convert</span><span class="s">Protect</span><span class="s">Tools</span></div><div class="pill" style="left:84.4px;top:316.8px;width:423.7px;height:23.0px;"><span class="s"><i class="ic"></i>Text Field</span><span class="s"><i class="ic"></i>Check Box</span><span class="s"><i class="ic"></i>Radio Button</span><span class="s"><i class="ic"></i>List</span><span class="s"><i class="ic"></i>Combo Box</span><span class="s"><i class="ic"></i>Button</span><span class="s"><i class="ic"></i>Digital Signature</span></div><div class="pill" style="left:171.9px;top:353.7px;width:248.7px;height:21.2px;"><span class="s">Annotate</span><span class="s">Edit</span><span class="s">Form</span><span class="s" style="color:#2563eb;border-bottom:1.5px solid #2563eb">Fill</span><span class="s">Convert</span><span class="s">Protect</span><span class="s">Tools</span></div><div class="pill" style="left:217.9px;top:382.2px;width:156.6px;height:22.1px;"><i class="ic" style="background:#888;width:8px;height:8px"></i><i class="ic" style="background:#888;width:8px;height:8px"></i><i class="ic" style="background:#888;width:8px;height:8px"></i><i class="ic" style="background:#888;width:8px;height:8px"></i><i class="ic" style="background:#222;width:8px;height:8px"></i><i class="ic" style="background:#555;width:8px;height:8px"></i><i class="ic" style="background:#555;width:8px;height:8px"></i></div><div class="pill" style="left:171.9px;top:418.1px;width:248.7px;height:21.2px;"><span class="s">Annotate</span><span class="s">Edit</span><span class="s">Form</span><span class="s">Fill</span><span class="s" style="color:#2563eb;border-bottom:1.5px solid #2563eb">Convert</span><span class="s">Protect</span><span class="s">Tools</span></div><div class="pill" style="left:109.2px;top:446.7px;width:373.0px;height:22.1px;"><span class="s"><i class="ic"></i>To Word</span><span class="s"><i class="ic"></i>To Excel</span><span class="s"><i class="ic"></i>To PPT</span><span class="s"><i class="ic"></i>To Image</span><span class="s"><i class="ic"></i>To Other &#9662;</span><span class="s"><i class="ic"></i>Image to PDF</span></div><div class="pill" style="left:171.9px;top:485.4px;width:248.7px;height:22.1px;"><span class="s">Annotate</span><span class="s">Edit</span><span class="s">Form</span><span class="s">Fill</span><span class="s">Convert</span><span class="s" style="color:#2563eb;border-bottom:1.5px solid #2563eb">Protect</span><span class="s">Tools</span></div><div class="pill" style="left:158.0px;top:514.8px;width:276.3px;height:22.1px;"><span class="s"><i class="ic"></i>Redact</span><span class="s"><i class="ic"></i>Security</span><span class="s"><i class="ic"></i>Remove Security</span><span class="s"><i class="ic"></i>Digital Signature</span></div><div class="pill" style="left:171.9px;top:550.8px;width:248.7px;height:22.1px;"><span class="s">Annotate</span><span class="s">Edit</span><span class="s">Form</span><span class="s">Fill</span><span class="s">Convert</span><span class="s">Protect</span><span class="s" style="color:#2563eb;border-bottom:1.5px solid #2563eb">Tools</span></div><div class="pill" style="left:100.9px;top:579.3px;width:391.4px;height:23.0px;"><span class="s"><i class="ic"></i>OCR</span><span class="s"><i class="ic"></i>Merge</span><span class="s"><i class="ic"></i>Compress &#9662;</span><span class="s"><i class="ic"></i>Compare &#9662;</span><span class="s"><i class="ic"></i>Extract Images</span><span class="s"><i class="ic"></i>TTS</span><span class="s"><i class="ic"></i>Batch</span></div></div></div>
<div class="num" style="left:1122.3px;margin-left:-.2px;top:267.7px;color:#3b3f4d">5</div>
<div class="cell" style="left:1390.55px;top:22.7px"><div class="pg"><div class="hl">Quick Start Guide</div><svg class="hic" width="16" height="16" viewBox="0 0 16 16"><path d="M1 7.5h14M8 1v12" stroke="#e5322d" stroke-width="2.2" fill="none"/><path d="M8 7.5 2 3" stroke="#e5322d" stroke-width="1.5"/></svg><div class="hrr">PDF Reader Pro</div><div class="rule"></div><div class="pn">5</div><div class="h1" style="top:76.3px">2.Read</div><div class="h2" style="left:83.4px;top:114.5px;">1)&nbsp;&nbsp;&nbsp; Open PDFs</div><div class="nw" style="left:101.8px;top:137.6px;">PDF Reader Pro for Mac has several ways to open PDFs:</div><div class="nw" style="left:117.4px;top:161.5px;">1.</div><div class="p" style="left:131.2px;top:161.5px;width:388.7px;"><b>Make PDF Reader Pro as your default viewer.</b> Tap PDF Reader Pro on the main menu -&gt; <a>Settings</a> -&gt; <a>General</a>, and tick <a>Set PDF Reader Pro as the default PDF viewer</a>. If you set it as your default app for opening PDFs, double-click on a PDF file in Finder, and it will be opened in PDF Reader Pro.</div><div class="nw" style="left:117.4px;top:254.5px;">2.</div><div class="p" style="left:131.2px;top:254.5px;width:388.7px;"><b>Drag and drop.</b> Launch PDF Reader Pro, then drag-n-drop any PDF file from Finder to the software.</div><div class="nw" style="left:117.4px;top:301.5px;">3.</div><div class="p" style="left:131.2px;top:301.5px;width:388.7px;"><b>Open directly.</b> Launch PDF Reader Pro, click <a>Open File</a> in the home page.</div><div class="nw" style="left:117.4px;top:324.5px;">4.</div><div class="p" style="left:131.2px;top:324.5px;width:388.7px;"><b>Drag to the Dock icon.</b> When PDF Reader Pro is in your dock, just drag-n-drop PDF file on the PDF Reader Pro icon, and the file will be opened in a new tab.</div><div class="h2" style="left:78.7px;top:400.0px;">2) Split View</div><div class="p" style="left:94.4px;top:424.0px;width:425.5px;">In order to view two documents or two parts of the same document side by side within the PDF Reader Pro app window, you can use the Split View mode (Horizontal and Vertical). Use it to translate text, research papers, compare plans and finalize contracts. PDF Reader Pro for Mac has several ways to enable Split View:</div><div class="nw" style="left:117.4px;top:523.5px;white-space:nowrap;text-align-last:justify;letter-spacing:-.3px;">1.</div><div class="p" style="left:131.2px;top:523.5px;width:388.7px;white-space:nowrap;text-align-last:justify;letter-spacing:-.3px;">Open a file and tap <a>Page Display</a> <span class="s ico"></span> on the toolbar, and the properties panel shows,</div><div class="nw" style="left:131.2px;top:548.3px;">then you can see <a>Split View</a>;</div><div class="nw" style="left:117.4px;top:571.3px;">2.</div><div class="p" style="left:131.2px;top:571.3px;width:388.7px;">Or activate via <a>View</a> on the main menu -&gt; <a>Split View</a>;</div><div class="nw" style="left:117.4px;top:595.3px;">3.</div><div class="p" style="left:131.2px;top:595.3px;width:388.7px;">You can choose <a>Horizontal</a> or <a>Vertical</a> when you activate it.</div><div class="nw" style="left:117.4px;top:618.3px;">4.</div><div class="p" style="left:131.2px;top:618.3px;width:388.7px;">You can drag and drop a file or <a>Select File</a> to open another file to compare.</div><div class="nw" style="left:117.4px;top:642.3px;">5.</div><div class="p" style="left:131.2px;top:642.3px;width:388.7px;">If you need to change compared file, you can click <a>Select File</a>.</div></div></div>
<div class="num" style="left:1390.55px;margin-left:-.2px;top:267.7px;color:#3b3f4d">6</div>
<div class="cell" style="left:49.3px;top:329.7px"><div class="pg"><div class="hl">Quick Start Guide</div><svg class="hic" width="16" height="16" viewBox="0 0 16 16"><path d="M1 7.5h14M8 1v12" stroke="#e5322d" stroke-width="2.2" fill="none"/><path d="M8 7.5 2 3" stroke="#e5322d" stroke-width="1.5"/></svg><div class="hrr">PDF Reader Pro</div><div class="rule"></div><div class="pn">6</div><div class="img" style="left:133.8px;top:76.4px;width:327.9px;height:177.4px;background:#fff;border:1px solid #dfe0e4"></div><div class="img" style="left:134.3px;top:76.9px;width:326.9px;height:19.9px;background:#f8f8fa;border:0"></div><div class="img" style="left:134.3px;top:96.8px;width:59.5px;height:156.4px;background:#fafafb;border:0"></div><div class="img" style="left:139.6px;top:75.9px;width:16.3px;height:16.3px;background:#dfe6f3;border:3px solid #e0685e;border-radius:50%"></div><div class="img" style="left:144.0px;top:80.7px;width:7.7px;height:7.1px;background:#7f93b8;border:0"></div><div class="img" style="left:168.2px;top:82.2px;width:14.0px;height:3.1px;background:#d3d4d9;border:0"></div><div class="img" style="left:189.9px;top:82.2px;width:3.8px;height:3.1px;background:#d3d4d9;border:0"></div><div class="img" style="left:247.3px;top:82.2px;width:11.5px;height:4.1px;background:#5b93ef;border:0"></div><div class="img" style="left:266.5px;top:82.7px;width:6.9px;height:3.1px;background:#b4b6bd;border:0"></div><div class="img" style="left:280.0px;top:82.7px;width:6.9px;height:3.1px;background:#b4b6bd;border:0"></div><div class="img" style="left:293.8px;top:82.7px;width:5.1px;height:3.1px;background:#b4b6bd;border:0"></div><div class="img" style="left:306.0px;top:82.7px;width:11.5px;height:3.1px;background:#b4b6bd;border:0"></div><div class="img" style="left:323.9px;top:82.7px;width:11.5px;height:3.1px;background:#b4b6bd;border:0"></div><div class="img" style="left:341.7px;top:82.7px;width:8.9px;height:3.1px;background:#b4b6bd;border:0"></div><div class="img" style="left:433.1px;top:80.7px;width:5.6px;height:6.1px;background:#4a4d58;border-radius:2px"></div><div class="img" style="left:443.8px;top:80.7px;width:5.6px;height:6.1px;background:#4a4d58;border-radius:2px"></div><div class="img" style="left:456.1px;top:80.7px;width:5.6px;height:6.1px;background:#4a4d58;border-radius:2px"></div><div class="img" style="left:218.7px;top:89.9px;width:6.1px;height:5.1px;background:#3fbf6a;border:0"></div><div class="img" style="left:229.5px;top:89.9px;width:3.1px;height:5.1px;background:#58b86e;border:0"></div><div class="img" style="left:237.6px;top:89.9px;width:5.1px;height:5.1px;background:#e8b06a;border:0"></div><div class="img" style="left:248.3px;top:89.9px;width:3.1px;height:5.1px;background:#e0685e;border:0"></div><div class="img" style="left:259.6px;top:89.9px;width:3.6px;height:5.1px;background:#8a8c94;border:0"></div><div class="img" style="left:267.7px;top:89.9px;width:5.6px;height:5.1px;background:#3fae62;border:0"></div><div class="img" style="left:281.0px;top:89.9px;width:3.6px;height:5.1px;background:#8a5a5a;border:0"></div><div class="img" style="left:289.4px;top:89.9px;width:5.9px;height:5.1px;background:#9a9ca4;border:0"></div><div class="img" style="left:302.2px;top:89.9px;width:5.1px;height:5.1px;background:#8a8c94;border:0"></div><div class="img" style="left:311.6px;top:89.9px;width:5.1px;height:5.1px;background:#8a8c94;border:0"></div><div class="img" style="left:322.1px;top:89.9px;width:3.1px;height:5.1px;background:#8a8c94;border:0"></div><div class="img" style="left:330.3px;top:89.9px;width:2.6px;height:5.1px;background:#b4b6bd;border:0"></div><div class="img" style="left:337.9px;top:89.9px;width:5.9px;height:5.1px;background:#8a8c94;border:0"></div><div class="img" style="left:351.4px;top:89.9px;width:3.6px;height:5.1px;background:#6b6e78;border:0"></div><div class="img" style="left:359.6px;top:89.9px;width:4.6px;height:5.1px;background:#8a8c94;border:0"></div><div class="img" style="left:371.1px;top:89.9px;width:6.4px;height:5.1px;background:#6b6e78;border:0"></div><div class="img" style="left:137.1px;top:101.1px;width:7.1px;height:3.1px;background:#8a8c94;border:0"></div><div class="img" style="left:140.1px;top:109.3px;width:18.4px;height:2.8px;background:#c5c6cb;border:0"></div><div class="img" style="left:142.2px;top:116.2px;width:6.1px;height:6.6px;background:#6a9af0;border:0"></div><div class="img" style="left:138.1px;top:124.8px;width:14.3px;height:2.0px;background:#d0d1d6;border:0"></div><div class="img" style="left:160.6px;top:116.2px;width:6.1px;height:6.6px;background:#a5a7ae;border:0"></div><div class="img" style="left:156.5px;top:124.8px;width:14.3px;height:2.0px;background:#d0d1d6;border:0"></div><div class="img" style="left:177.9px;top:116.2px;width:6.1px;height:6.6px;background:#a5a7ae;border:0"></div><div class="img" style="left:173.8px;top:124.8px;width:14.3px;height:2.0px;background:#d0d1d6;border:0"></div><div class="img" style="left:142.2px;top:129.4px;width:6.1px;height:6.6px;background:#a5a7ae;border:0"></div><div class="img" style="left:138.1px;top:138.1px;width:14.3px;height:2.0px;background:#d0d1d6;border:0"></div><div class="img" style="left:160.6px;top:129.4px;width:6.1px;height:6.6px;background:#a5a7ae;border:0"></div><div class="img" style="left:156.5px;top:138.1px;width:14.3px;height:2.0px;background:#d0d1d6;border:0"></div><div class="img" style="left:177.9px;top:129.4px;width:6.1px;height:6.6px;background:#a5a7ae;border:0"></div><div class="img" style="left:173.8px;top:138.1px;width:14.3px;height:2.0px;background:#d0d1d6;border:0"></div><div class="img" style="left:137.1px;top:145.3px;width:6.9px;height:5.1px;background:#79a7f3;border-radius:2px"></div><div class="img" style="left:145.8px;top:146.5px;width:22.5px;height:2.6px;background:#c5c6cb;border:0"></div><div class="img" style="left:137.1px;top:151.9px;width:6.9px;height:5.1px;background:#79a7f3;border-radius:2px"></div><div class="img" style="left:145.8px;top:153.2px;width:13.5px;height:2.6px;background:#c5c6cb;border:0"></div><div class="img" style="left:134.5px;top:161.3px;width:59.2px;height:32.7px;background:#fff;border:2.5px solid #ea9a90;border-radius:4px"></div><div class="img" style="left:140.1px;top:165.7px;width:13.3px;height:2.6px;background:#c5c6cb;border:0"></div><div class="img" style="left:157.5px;top:170.3px;width:12.2px;height:12.8px;background:#dbe7fb;border:0"></div><div class="img" style="left:142.7px;top:171.5px;width:5.1px;height:6.9px;background:#8a8c94;border:0"></div><div class="img" style="left:139.6px;top:179.7px;width:11.2px;height:2.0px;background:#b4b6bd;border:0"></div><div class="img" style="left:161.1px;top:171.5px;width:5.1px;height:6.9px;background:#5b8be8;border:0"></div><div class="img" style="left:158.0px;top:179.7px;width:11.2px;height:2.0px;background:#b4b6bd;border:0"></div><div class="img" style="left:178.4px;top:171.5px;width:5.1px;height:6.9px;background:#8a8c94;border:0"></div><div class="img" style="left:175.4px;top:179.7px;width:11.2px;height:2.0px;background:#b4b6bd;border:0"></div><div class="img" style="left:157.5px;top:186.9px;width:11.2px;height:2.3px;background:#c5c6cb;border:0"></div><div class="img" style="left:137.1px;top:193.5px;width:6.9px;height:5.1px;background:#79a7f3;border-radius:2px"></div><div class="img" style="left:145.8px;top:194.8px;width:27.0px;height:2.6px;background:#c5c6cb;border:0"></div><div class="img" style="left:137.1px;top:200.9px;width:6.9px;height:5.1px;background:#79a7f3;border-radius:2px"></div><div class="img" style="left:145.8px;top:202.2px;width:25.5px;height:2.6px;background:#c5c6cb;border:0"></div><div class="img" style="left:140.1px;top:215.2px;width:11.7px;height:2.8px;background:#c5c6cb;border:0"></div><div class="img" style="left:149.6px;top:222.3px;width:5.6px;height:5.6px;background:#f7e2a0;border-radius:50%"></div><div class="img" style="left:160.8px;top:222.3px;width:5.6px;height:5.6px;background:#cdeac8;border-radius:50%"></div><div class="img" style="left:171.3px;top:221.6px;width:7.1px;height:7.1px;background:#1a1a1a;border-radius:50%"></div><div class="img" style="left:183.3px;top:222.3px;width:5.6px;height:5.6px;background:#ececee;border-radius:50%"></div><div class="img" style="left:139.1px;top:231.8px;width:3.6px;height:3.6px;background:#d5d6da;border:0"></div><div class="img" style="left:205.2px;top:108.8px;width:108.5px;height:7.7px;background:#cfe6f5;border:0"></div><div class="img" style="left:229.5px;top:111.1px;width:66.3px;height:3.1px;background:#7a9ab8;border:0"></div><div class="img" style="left:205.2px;top:120.5px;width:52.8px;height:17.1px;background:#f9dcc8;border:0"></div><div class="img" style="left:206.0px;top:119.0px;width:7.1px;height:7.1px;background:#222;border-radius:50%"></div><div class="img" style="left:216.7px;top:121.5px;width:17.9px;height:2.0px;background:#e8a070;border:0"></div><div class="img" style="left:207.8px;top:127.7px;width:47.2px;height:8.2px;background:#f2c3a2;border:0"></div><div class="img" style="left:206.5px;top:140.2px;width:49.8px;height:30.6px;background:#dadbdf;border:0"></div><div class="img" style="left:206.5px;top:172.6px;width:31.1px;height:3.1px;background:#f3b6e0;border:0"></div><div class="img" style="left:206.5px;top:178.4px;width:49.8px;height:29.3px;background:#dadbdf;border:0"></div><div class="img" style="left:209.6px;top:209.8px;width:45.4px;height:12.0px;background:#e3e4e7;border:0"></div><div class="img" style="left:263.9px;top:119.7px;width:48.5px;height:33.2px;background:#dadbdf;border:0"></div><div class="img" style="left:269.5px;top:157.3px;width:11.0px;height:26.3px;background:#c8a894;border-radius:40%"></div><div class="img" style="left:279.2px;top:158.0px;width:11.5px;height:16.6px;background:#d9c0b0;border-radius:40%"></div><div class="img" style="left:295.8px;top:167.0px;width:10.2px;height:2.6px;background:#c5c6cb;border:0"></div><div class="img" style="left:294.5px;top:178.4px;width:12.8px;height:2.6px;background:#c5c6cb;border:0"></div><div class="img" style="left:263.9px;top:185.8px;width:47.2px;height:2.0px;background:#f0a8e0;border:0"></div><div class="img" style="left:263.9px;top:189.9px;width:48.5px;height:15.3px;background:#dadbdf;border:0"></div><div class="img" style="left:261.4px;top:206.5px;width:51.8px;height:20.9px;background:#cdbcea;border:0"></div><div class="img" style="left:267.7px;top:207.8px;width:15.8px;height:2.6px;background:#f08ac0;border:0"></div><div class="img" style="left:263.1px;top:212.4px;width:48.0px;height:13.3px;background:#bcaae0;border:0"></div><div class="img" style="left:261.1px;top:229.7px;width:7.1px;height:7.1px;background:#222;border-radius:50%"></div><div class="img" style="left:267.7px;top:232.0px;width:45.4px;height:21.2px;background:#f6d6ae;border:0"></div><div class="img" style="left:234.6px;top:233.8px;width:58.7px;height:19.4px;background:#fff;border:0"></div><div class="img" style="left:240.9px;top:235.9px;width:12.8px;height:2.0px;background:#d0d1d6;border:0"></div><div class="img" style="left:275.4px;top:243.5px;width:7.7px;height:6.4px;background:#c8d4e8;border:0"></div><div class="img" style="left:220.5px;top:226.2px;width:11.5px;height:28.8px;background:#d6304a;transform:skewX(-28deg);border:0"></div><div class="img" style="left:319.5px;top:99.3px;width:5.6px;height:35.7px;background:#f8d3dc;border:0"></div><div class="img" style="left:325.9px;top:97.3px;width:1.0px;height:155.9px;background:#ececef;border:0"></div><div class="img" style="left:385.1px;top:156.7px;width:21.7px;height:21.7px;background:#fff;border:1px solid #e3e4e8"></div><div class="img" style="left:374.9px;top:183.0px;width:40.8px;height:2.8px;background:#9a9ca4;border:0"></div><div class="img" style="left:364.7px;top:187.6px;width:61.2px;height:2.0px;background:#dcdde1;border:0"></div><div class="img" style="left:388.9px;top:191.5px;width:12.8px;height:2.0px;background:#dcdde1;border:0"></div><div class="h2" style="left:78.7px;top:296.0px;">3) Multi-tab View</div><div class="p" style="left:94.4px;top:319.0px;width:423.7px;">We all need an extension to browser tabs effortlessly. Now PDF Reader Pro supports multi-tab viewer to make it easy to manage files. You can open documents in the same window or in a new window.</div><div class="nw" style="left:117.4px;top:389.0px;">1.</div><div class="p" style="left:131.2px;top:389.0px;width:221.0px;">Tab <a>+</a> button on the top -&gt; <a>Open File</a>;</div><div class="nw" style="left:117.4px;top:412.0px;">2.</div><div class="p" style="left:131.2px;top:412.0px;width:221.0px;">Then a new file will be opened in a new tab.</div><div class="img" style="left:356.9px;top:372.1px;width:147.4px;height:67.2px;background:#f4f4f6;border:1px solid #d9dade"></div><div class="img" style="left:358.7px;top:373.9px;width:143.7px;height:9.2px;background:#e3e4e7;border:0"></div><div class="img" style="left:361.5px;top:375.8px;width:15.7px;height:4.6px;background:#e7a13c;border:0;border-radius:3px"></div><div class="img" style="left:381.8px;top:374.8px;width:39.6px;height:8.3px;background:#fff;border:0"></div><div class="img" style="left:481.2px;top:373.0px;width:18.4px;height:16.6px;background:none;border:2px solid #e0685e;border-radius:50%"></div><div class="img" style="left:373.5px;top:408.9px;width:117.0px;height:28.6px;background:#dcdde0;border:0"></div><div class="img" style="left:476.6px;top:397.9px;width:6.4px;height:6.4px;background:#34a853;border:0;border-radius:50%"></div><div class="h2" style="left:78.7px;top:465.4px;">4) Presentation</div><div class="p" style="left:105.5px;top:488.5px;width:414.4px;">Your PDF files could be directly presented as a keynote. Set perfect effect, duration and extent to make a perfect presentation.</div><div class="nw" style="left:110.1px;top:541.9px;font-size:10.4px;">1. Tap <a>Page Display</a> <span class="s ico"></span> on the toolbar -&gt; <a>Presentation</a>, it will present you PDF as slideshow;</div><div class="nw" style="left:110.1px;top:565.8px;">2. Click the <a>Back button</a> if you finish your presentation.</div><div class="nw" style="left:110.1px;top:589.8px;">3. Click <a>any color</a> in the top menu bar to take notes on the document in Presentation</div><div class="nw" style="left:110.1px;top:612.8px;">mode;</div><div class="nw" style="left:110.1px;top:635.8px;">4. Click <a>Undo</a> on the top menu bar to undo the last operation.</div><div class="nw" style="left:110.1px;top:659.8px;">5. Click <a>Delete</a> on the top menu bar to delete all comments.</div></div></div>
<div class="num" style="left:49.3px;margin-left:-.2px;top:574.7px;color:#3b3f4d">7</div>
<div class="cell" style="left:317.55px;top:329.7px"><div class="pg"><div class="hl">Quick Start Guide</div><svg class="hic" width="16" height="16" viewBox="0 0 16 16"><path d="M1 7.5h14M8 1v12" stroke="#e5322d" stroke-width="2.2" fill="none"/><path d="M8 7.5 2 3" stroke="#e5322d" stroke-width="1.5"/></svg><div class="hrr">PDF Reader Pro</div><div class="rule"></div><div class="pn">7</div><div class="h2" style="left:79.8px;top:71.2px;">5) Auto Scroll</div><div class="p" style="left:105.5px;top:95.2px;width:416.3px;">Want to show lyrics for captions? No worries! Set a perfect time interval and jump space to match your singing and reading.</div><div class="nw" style="left:117.5px;top:142.2px;">1.</div><div class="p" style="left:131.3px;top:142.2px;width:390.5px;">Tap <a>View</a> on the main menu -&gt; <a>Auto Scroll</a>, then it shows pages automatically;</div><div class="nw" style="left:117.5px;top:165.2px;text-align:left;">2.</div><div class="p" style="left:131.3px;top:165.2px;width:390.5px;text-align:left;">Tap <a>PDF Reader Pro</a> on the main menu -&gt; <a>Settings</a> -&gt; <a>Page Display</a> -&gt; <a>Auto Scroll Options...</a> to set the time interval and jump space.</div><div class="h2" style="left:79.8px;top:241.6px;">6) Night Mode Themes</div><div class="p" style="left:105.5px;top:265.6px;width:416.3px;">Eyes feel uneasy after long time reading? PDF Reader Pro provides different themes for you to switch light mode to night mode:</div><div class="nw" style="left:117.5px;top:318.1px;white-space:nowrap;">1.</div><div class="p" style="left:131.3px;top:318.1px;width:390.5px;white-space:nowrap;">Click <a>Page Display</a> <span class="s ico"></span> on the toolbar and the properties panel shows. You can see</div><div class="nw" style="left:131.3px;top:342.0px;"><a>Themes</a>;</div><div class="nw" style="left:117.5px;top:367.8px;">2.</div><div class="p" style="left:131.3px;top:367.8px;width:390.5px;">Or tap <a>View</a> on main menu -&gt; <a>Themes</a>;</div><div class="nw" style="left:117.5px;top:390.8px;text-align:left;line-height:22.5px;font-size:10.3px;">3.</div><div class="p" style="left:131.3px;top:390.8px;width:220.1px;text-align:left;line-height:22.5px;font-size:10.3px;">You can switch between light mode, night mode, eye-protection mode or customize themes by changing the theme color in the palette.</div><div class="img" style="left:362.5px;top:370.2px;width:139.1px;height:85.7px;background:#f4f4f6;border:1.5px solid #dcdde1"></div><div class="nw" style="left:373.6px;top:374.2px;font-size:6.5px;color:#444;-webkit-text-stroke:0;">Themes</div><div class="img" style="left:369.9px;top:399.7px;width:11.1px;height:11.1px;background:#fff;border:0;border-radius:50%"></div><div class="img" style="left:397.5px;top:399.7px;width:11.1px;height:11.1px;background:#f7e7b4;border:0;border-radius:50%"></div><div class="img" style="left:425.1px;top:399.7px;width:11.1px;height:11.1px;background:#cfe8cf;border:0;border-radius:50%"></div><div class="img" style="left:452.8px;top:399.7px;width:11.1px;height:11.1px;background:#111;border:0;border-radius:50%"></div><div class="img" style="left:480.4px;top:399.7px;width:11.1px;height:11.1px;background:#f0f0f0;border:0;border-radius:50%"></div><div class="img" style="left:373.6px;top:424.6px;width:3.7px;height:5.5px;background:#777;border:0"></div></div></div>
<div class="num" style="left:317.55px;margin-left:-.2px;top:574.7px;color:#3b3f4d">8</div>
<div class="cell" style="left:585.8px;top:329.7px"><div class="pg"><div class="hl">Quick Start Guide</div><svg class="hic" width="16" height="16" viewBox="0 0 16 16"><path d="M1 7.5h14M8 1v12" stroke="#e5322d" stroke-width="2.2" fill="none"/><path d="M8 7.5 2 3" stroke="#e5322d" stroke-width="1.5"/></svg><div class="hrr">PDF Reader Pro</div><div class="rule"></div><div class="pn">8</div><div class="h1" style="top:74.5px">3.Annotate</div><div class="h2" style="left:78.8px;top:120.1px;">1) How to Annotate</div><div class="nw" style="left:97.3px;top:142.2px;">Here is how you can annotate a document:</div><div class="nw" style="left:115.7px;top:166.1px;">1.</div><div class="p" style="left:130.4px;top:166.1px;width:390.5px;">Open a document;</div><div class="nw" style="left:115.7px;top:189.1px;">2.</div><div class="p" style="left:130.4px;top:189.1px;width:390.5px;">Click <a>Annotate</a> on the toolbar;</div><div class="nw" style="left:115.7px;top:213.1px;">3.</div><div class="p" style="left:130.4px;top:213.1px;width:390.5px;">Select a tool from the list:</div><div class="nw" style="left:124.0px;top:236.1px;"><span class="s" style="color:#e03a30">&#8226;</span></div><div class="p" style="left:138.7px;top:236.1px;width:382.2px;"><b>Text markup</b> : Select the text (<a>highlight, underline, strikethrough, Squiggly</a>) and apply it to the text you want to annotate.</div><div class="nw" style="left:124.0px;top:283.1px;"><span class="s" style="color:#e03a30">&#8226;</span></div><div class="p" style="left:138.7px;top:283.1px;width:382.2px;"><b>Freehand Drawing</b> : Add freehand drawings by hand writing just like you do with a pen.</div><div class="nw" style="left:124.0px;top:329.1px;"><span class="s" style="color:#e03a30">&#8226;</span></div><div class="p" style="left:138.7px;top:329.1px;width:382.2px;"><b>Text Box</b> : Click on any place in the document and start typing.</div><div class="nw" style="left:124.0px;top:353.1px;"><span class="s" style="color:#e03a30">&#8226;</span></div><div class="p" style="left:138.7px;top:353.1px;width:382.2px;"><b>Anchored Notes</b> : This tool allows notes to be added to your document as comments. Notes are life savers when it comes to cross referencing and adding contextual knowledge. Select the tool, click where you want to add a note and it will pop up right there.</div><div class="nw" style="left:124.0px;top:470.0px;"><span class="s" style="color:#e03a30">&#8226;</span></div><div class="p" style="left:138.7px;top:470.0px;width:382.2px;">&nbsp;<b>Shapes</b> : Select the shapes tools (<a>Rectangle</a>, <a>Circle</a>, <a>Arrow</a> and <a>Line</a>). Pick your shape, color, and other options in the side toolbar. Then click and drag where you need it in the document.</div><div class="nw" style="left:124.0px;top:540.0px;"><span class="s" style="color:#e03a30">&#8226;</span></div><div class="p" style="left:138.7px;top:540.0px;width:382.2px;"><b>Measure</b> : Measure the distance, perimeter, and area of objects in the document and annotate them accordingly.</div><div class="nw" style="left:124.0px;top:587.0px;"><span class="s" style="color:#e03a30">&#8226;</span></div><div class="p" style="left:138.7px;top:587.0px;width:382.2px;"><b>Stamps</b> : Select the tool and choose <a>Standard</a>, <a>Custom</a> or <a>Dynamic</a> stamps.</div><div class="nw" style="left:124.0px;top:610.0px;"><span class="s" style="color:#e03a30">&#8226;</span></div><div class="p" style="left:138.7px;top:610.0px;width:382.2px;"><b>Signature</b> : Add legally binding signatures to documents. Select the tool, then either select signature or add a new one right there. Then click where you want to put the signature in the document.</div></div></div>
<div class="num" style="left:585.8px;margin-left:-.2px;top:574.7px;color:#3b3f4d">9</div>
<div class="cell" style="left:854.05px;top:329.7px"><div class="pg"><div class="hl">Quick Start Guide</div><svg class="hic" width="16" height="16" viewBox="0 0 16 16"><path d="M1 7.5h14M8 1v12" stroke="#e5322d" stroke-width="2.2" fill="none"/><path d="M8 7.5 2 3" stroke="#e5322d" stroke-width="1.5"/></svg><div class="hrr">PDF Reader Pro</div><div class="rule"></div><div class="pn">9</div><div class="h2" style="left:77.9px;top:72.2px;">2) Stamp</div><div class="nw" style="left:103.7px;top:96.1px;">Add special stamps to your PDFs or create custom stamps with text and images.</div><div class="nw" style="left:103.7px;top:119.1px;">1. Tap <a>Stamp</a> at Annotate on the toolbar;</div><div class="nw" style="left:103.7px;top:142.2px;">2. Then the properties panel shows;</div><div class="nw" style="left:103.7px;top:165.2px;">3. Select <a>Standard</a>, and you will get an ordinary text stamp like APPROVED;</div><div class="nw" style="left:103.7px;top:189.1px;">4. Select <a>Custom</a> to create a customized <a>Image Stamp</a> or <a>Text Stamp</a>;</div><div class="nw" style="left:103.7px;top:212.2px;">5. Select <a>Dynamic</a> to create a dynamic stamp consisting of an author and a date.</div><div class="img" style="left:229.0px;top:245.9px;width:139.1px;height:39.6px;background:#f1f7ea;border:1.5px solid #9dbb7c;border-radius:3px"></div><div class="nw" style="left:232.6px;top:249.0px;font-size:17px;color:#6f9a4a;-webkit-text-stroke:0;letter-spacing:.3px;">REVIEWED</div><div class="nw" style="left:232.6px;top:265.6px;font-size:8px;color:#7fa35e;-webkit-text-stroke:0;">By Adamsdale at 3/11, 16:30:03</div><div class="h2" style="left:77.9px;top:334.6px;">3) Measure</div><div class="nw" style="left:94.5px;top:364.1px;">To measure an object, click <a>Annotate</a> and choose <a>Measure</a> <span class="s ico"></span>, then choose the</div><div class="nw" style="left:94.5px;top:389.9px;">measurement tool you wish to use.</div><div class="nw" style="left:95.4px;top:412.0px;"><span class="s" style="font-size:14px">&#9679;</span></div><div class="p" style="left:114.8px;top:412.0px;width:405.2px;">Select <a>Line</a> to measure an object's length or height, or distance between two points;</div><div class="nw" style="left:95.4px;top:436.0px;"><span class="s" style="font-size:14px">&#9679;</span></div><div class="p" style="left:114.8px;top:436.0px;width:405.2px;">Select <a>Multilines</a> to measure the distance spanning multiple points;</div><div class="nw" style="left:95.4px;top:459.9px;"><span class="s" style="font-size:14px">&#9679;</span></div><div class="p" style="left:114.8px;top:459.9px;width:405.2px;">Select <a>Polygon</a> to measure the perimeter and area of closed shapes;</div><div class="nw" style="left:95.4px;top:482.9px;"><span class="s" style="font-size:14px">&#9679;</span></div><div class="p" style="left:114.8px;top:482.9px;width:405.2px;">Select <a>Rectangle</a> to quickly identify a complete rectangular area, and automatically calculate the perimeter and area;</div><div class="nw" style="left:106.5px;top:529.0px;color:#777;-webkit-text-stroke:.1px;"><i>Note: Click <a>ESC</a> to exit continuous marking mode.</i></div><div class="nw" style="left:106.5px;top:579.6px;font-size:12px;">Other Options</div><div class="nw" style="left:103.7px;top:606.3px;">1. Customize scale and precision</div><div class="nw" style="left:114.8px;top:630.3px;">- Navigate to the properties panel, click <a>Settings</a> upper right corner;</div><div class="nw" style="left:114.8px;top:653.3px;">- You can set the Scale and Precision here.</div><div class="nw" style="left:103.7px;top:677.3px;">2. Set measurement appearance</div><div class="nw" style="left:114.8px;top:701.2px;">- Click on the selected measurement and the properties panel will be displayed on</div><div class="nw" style="left:103.7px;top:724.2px;">the right side of the screen;</div><div class="nw" style="left:114.8px;top:747.3px;">- You can set the Fill Color, Border Color, Opacity, Line Width, Line Style, and Font</div></div></div>
<div class="num" style="left:854.05px;margin-left:-.2px;top:574.7px;color:#3b3f4d">10</div>
<div class="cell" style="left:1122.3px;top:329.7px"><div class="pg"><div class="hl">Quick Start Guide</div><svg class="hic" width="16" height="16" viewBox="0 0 16 16"><path d="M1 7.5h14M8 1v12" stroke="#e5322d" stroke-width="2.2" fill="none"/><path d="M8 7.5 2 3" stroke="#e5322d" stroke-width="1.5"/></svg><div class="hrr">PDF Reader Pro</div><div class="rule"></div><div class="pn">10</div><div class="nw" style="left:113.8px;top:71.2px;">here.</div><div class="nw" style="left:105.5px;top:96.1px;">3. Delete the Measurement</div><div class="nw" style="left:113.8px;top:118.2px;">- To delete the measurement in the PDF file, right click on the measurement and</div><div class="nw" style="left:113.8px;top:142.2px;">select <a>Delete</a>.</div><div class="h2" style="left:77.0px;top:195.6px;">4) Search Annotations</div><div class="nw" style="left:105.5px;top:225.0px;">To search the annotation directly, click <a>Annotations</a> <span class="s ico"></span> in the left sidebar, tap</div><div class="nw" style="left:105.5px;top:258.2px;"><a>Search</a> <span class="s" style="color:#999;font-size:8px;position:relative;top:-5px">&#9740;</span> icon, and enter the search content. You can choose <a>Whole Word</a> mode</div><div class="nw" style="left:105.5px;top:281.2px;">or <a>Case Sensitive</a> mode for a better result.</div><div class="h2" style="left:77.0px;top:332.8px;">5) Reply Annotations</div><div class="p" style="left:105.5px;top:356.8px;width:413.5px;">To enhance collaboration efficiency, PDF Reader Pro supports replying to comments made by others, such as <a>Accepted</a>, <a>Rejected</a>, <a>Canceled</a>, <a>Completed</a>, <a>None</a>.</div><div class="h2" style="left:77.0px;top:433.2px;">6) Export or Remove Annotations</div><div class="nw" style="left:105.5px;top:455.3px;">Want to export or remove annotation? Navigate to the Annotation on the left side,</div><div class="nw" style="left:109.2px;top:485.7px;">then click the icon <span class="s" style="color:#999;position:relative;top:-4px">&#183;&#183;&#183;</span> in the upper right corner, and you can see <a>Export</a></div><div class="nw" style="left:109.2px;top:509.6px;"><a>Annotations...</a> and&nbsp; <a>Remove All Annotations</a>;</div><div class="img" style="left:240.9px;top:542.5px;width:98.5px;height:182.4px;background:#f6f7f9;border:1px solid #e0e1e5"></div><div class="img" style="left:242.8px;top:544.3px;width:94.9px;height:7.4px;background:#e6e7ea;border:0"></div><div class="img" style="left:244.6px;top:546.2px;width:11.1px;height:3.7px;background:#e7a13c;border:0;border-radius:3px"></div><div class="img" style="left:244.6px;top:557.2px;width:42.4px;height:4.6px;background:#c9cacf;border:0"></div><div class="img" style="left:241.9px;top:568.3px;width:11.1px;height:156.6px;background:#eceef2;border:0"></div><div class="img" style="left:259.4px;top:582.1px;width:46.1px;height:4.6px;background:#c9cacf;border:0"></div><div class="img" style="left:324.7px;top:579.3px;width:9.2px;height:11.1px;background:#fff;border:1px solid #9aa"></div><div class="img" style="left:259.4px;top:609.7px;width:9.2px;height:7.4px;background:#34a853;border:0"></div><div class="img" style="left:271.3px;top:616.1px;width:27.6px;height:6.4px;background:#57c26f;border:0"></div><div class="img" style="left:259.4px;top:636.4px;width:72.8px;height:10.1px;background:#fff;border:1.5px solid #6aa0f0"></div><div class="img" style="left:296.2px;top:649.3px;width:35.9px;height:6.4px;background:#dfe8fb;border:0"></div><div class="img" style="left:259.4px;top:667.7px;width:9.2px;height:7.4px;background:#e7a13c;border:0"></div><div class="img" style="left:271.3px;top:668.6px;width:38.7px;height:3.7px;background:#c9cacf;border:0"></div><div class="img" style="left:259.4px;top:708.2px;width:9.2px;height:7.4px;background:#34a853;border:0"></div><div class="img" style="left:271.3px;top:709.2px;width:38.7px;height:3.7px;background:#c9cacf;border:0"></div><div class="img" style="left:337.6px;top:585.8px;width:11.1px;height:0.9px;background:#8db4f2;border:0"></div><div class="nw" style="left:342.2px;top:581.5px;font-size:5px;color:#888;-webkit-text-stroke:0;">Export / Remove Annotation</div><div class="img" style="left:337.6px;top:661.3px;width:11.1px;height:0.9px;background:#8db4f2;border:0"></div><div class="nw" style="left:346.8px;top:653.3px;font-size:5px;color:#888;-webkit-text-stroke:0;">Reply annotation</div><div class="img" style="left:219.8px;top:639.2px;width:22.1px;height:0.9px;background:#8db4f2;border:0"></div><div class="nw" style="left:195.8px;top:634.0px;font-size:5px;color:#888;-webkit-text-stroke:0;">Click here to</div><div class="nw" style="left:195.8px;top:640.4px;font-size:5px;color:#888;-webkit-text-stroke:0;">enter the annotation</div><div class="nw" style="left:195.8px;top:646.9px;font-size:5px;color:#888;-webkit-text-stroke:0;">panel</div></div></div>
<div class="num" style="left:1122.3px;margin-left:-.2px;top:574.7px;color:#3b3f4d">11</div>
<div class="cell" style="left:1390.55px;top:329.7px"><div class="pg"><div class="hl">Quick Start Guide</div><svg class="hic" width="16" height="16" viewBox="0 0 16 16"><path d="M1 7.5h14M8 1v12" stroke="#e5322d" stroke-width="2.2" fill="none"/><path d="M8 7.5 2 3" stroke="#e5322d" stroke-width="1.5"/></svg><div class="hrr">PDF Reader Pro</div><div class="rule"></div><div class="pn">11</div><div class="h1" style="top:74.5px">4.&nbsp; Edit PDF</div><div class="h2" style="left:78.7px;top:113.6px;">1) Edit Text</div><div class="p" style="left:104.5px;top:137.6px;width:415.4px;text-align:left;">Want to make changes in PDFs, such as fixing a typo or adding more content? The convenient and quick operation makes it easier to edit PDFs in your workflow.</div><div class="nw" style="left:115.6px;top:184.5px;">1.</div><div class="p" style="left:131.2px;top:184.5px;width:388.7px;">Tap <a>Edit</a> on the toolbar;</div><div class="nw" style="left:115.6px;top:207.5px;">2.</div><div class="p" style="left:131.2px;top:207.5px;width:388.7px;">There you can <a>add</a>, <a>delete</a>, <a>move</a> or <a>modify</a> text;</div><div class="nw" style="left:115.6px;top:230.6px;text-align:left;">3.</div><div class="p" style="left:131.2px;top:230.6px;width:388.7px;text-align:left;">You can also adjust the <a>font color</a>, <a>font size</a>, <a>font weight</a>, <a>transparency</a>, <a>alignment</a>, etc. in the right panel;</div><div class="nw" style="left:115.6px;top:277.5px;">4.</div><div class="p" style="left:131.2px;top:277.5px;width:388.7px;">Or click <a>Text</a> and drag a rectangle to create a new text box.</div><div class="img" style="left:163.6px;top:307.3px;width:263.7px;height:157.2px;background:#fff;border:1px solid #e1e2e6"></div><div class="img" style="left:164.0px;top:307.8px;width:262.9px;height:18.9px;background:#f9f9fb;border:0"></div><div class="img" style="left:167.9px;top:310.6px;width:5.4px;height:4.7px;background:#4a4d58;border:0"></div><div class="img" style="left:175.4px;top:310.6px;width:5.4px;height:4.7px;background:#4a4d58;border:0"></div><div class="img" style="left:183.0px;top:310.6px;width:3.2px;height:4.7px;background:#9a9ca4;border:0"></div><div class="img" style="left:194.8px;top:310.6px;width:3.2px;height:4.7px;background:#c5c6cb;border:0"></div><div class="img" style="left:202.4px;top:310.6px;width:6.5px;height:4.7px;background:#c5c6cb;border:0"></div><div class="img" style="left:214.2px;top:310.6px;width:5.4px;height:4.7px;background:#c5c6cb;border:0"></div><div class="img" style="left:250.8px;top:310.6px;width:10.8px;height:4.7px;background:#b4b6bd;border:0"></div><div class="img" style="left:268.0px;top:310.6px;width:5.4px;height:4.7px;background:#5b93ef;border:0"></div><div class="img" style="left:280.9px;top:310.6px;width:5.4px;height:4.7px;background:#b4b6bd;border:0"></div><div class="img" style="left:292.8px;top:310.6px;width:4.3px;height:4.7px;background:#b4b6bd;border:0"></div><div class="img" style="left:303.5px;top:310.6px;width:8.6px;height:4.7px;background:#b4b6bd;border:0"></div><div class="img" style="left:320.8px;top:310.6px;width:8.6px;height:4.7px;background:#b4b6bd;border:0"></div><div class="img" style="left:335.8px;top:310.6px;width:7.5px;height:4.7px;background:#b4b6bd;border:0"></div><div class="img" style="left:400.4px;top:310.6px;width:5.4px;height:4.7px;background:#4a4d58;border:0"></div><div class="img" style="left:410.1px;top:310.6px;width:3.2px;height:4.7px;background:#6b6e78;border:0"></div><div class="img" style="left:419.8px;top:310.6px;width:6.5px;height:4.7px;background:#4a4d58;border:0"></div><div class="img" style="left:199.1px;top:319.2px;width:3.9px;height:4.7px;background:#555862;border:0"></div><div class="img" style="left:204.3px;top:320.3px;width:4.5px;height:2.6px;background:#b9bac0;border:0"></div><div class="img" style="left:215.3px;top:319.2px;width:3.9px;height:4.7px;background:#555862;border:0"></div><div class="img" style="left:220.4px;top:320.3px;width:8.8px;height:2.6px;background:#b9bac0;border:0"></div><div class="img" style="left:235.7px;top:319.2px;width:3.9px;height:4.7px;background:#555862;border:0"></div><div class="img" style="left:240.9px;top:320.3px;width:5.6px;height:2.6px;background:#b9bac0;border:0"></div><div class="img" style="left:254.0px;top:319.2px;width:3.9px;height:4.7px;background:#555862;border:0"></div><div class="img" style="left:259.2px;top:320.3px;width:14.2px;height:2.6px;background:#b9bac0;border:0"></div><div class="img" style="left:283.1px;top:319.2px;width:3.9px;height:4.7px;background:#555862;border:0"></div><div class="img" style="left:288.3px;top:320.3px;width:15.3px;height:2.6px;background:#b9bac0;border:0"></div><div class="img" style="left:311.1px;top:319.2px;width:3.9px;height:4.7px;background:#555862;border:0"></div><div class="img" style="left:316.2px;top:320.3px;width:21.7px;height:2.6px;background:#b9bac0;border:0"></div><div class="img" style="left:346.6px;top:319.2px;width:3.9px;height:4.7px;background:#555862;border:0"></div><div class="img" style="left:351.8px;top:320.3px;width:19.6px;height:2.6px;background:#b9bac0;border:0"></div><div class="img" style="left:380.0px;top:319.2px;width:3.9px;height:4.7px;background:#555862;border:0"></div><div class="img" style="left:385.1px;top:320.3px;width:6.7px;height:2.6px;background:#b9bac0;border:0"></div><div class="img" style="left:164.0px;top:326.7px;width:11.4px;height:137.4px;background:#f6f6f8;border:0"></div><div class="img" style="left:166.2px;top:327.8px;width:6.5px;height:3.4px;background:#8db0f0;border:0"></div><div class="img" style="left:166.2px;top:336.8px;width:6.5px;height:3.4px;background:#c0c2c9;border:0"></div><div class="img" style="left:166.2px;top:346.5px;width:6.5px;height:3.4px;background:#7a7d88;border:0"></div><div class="img" style="left:166.2px;top:355.1px;width:6.5px;height:3.4px;background:#c0c2c9;border:0"></div><div class="img" style="left:166.2px;top:364.8px;width:6.5px;height:3.4px;background:#7a7d88;border:0"></div><div class="img" style="left:370.3px;top:328.9px;width:2.2px;height:12.9px;background:#c5c6cb;border:0"></div><div class="img" style="left:191.6px;top:327.8px;width:88.7px;height:7.8px;background:#f1f1f4;border-radius:3px"></div><div class="img" style="left:194.6px;top:328.2px;width:3.9px;height:6.9px;background:#111;border:0"></div><div class="img" style="left:204.5px;top:329.1px;width:23.7px;height:5.2px;background:#dcdde1;border:0"></div><div class="img" style="left:235.5px;top:329.5px;width:2.6px;height:4.3px;background:#b4b6bd;border:0"></div><div class="img" style="left:243.1px;top:329.5px;width:2.6px;height:4.3px;background:#b4b6bd;border:0"></div><div class="img" style="left:250.6px;top:329.5px;width:2.6px;height:4.3px;background:#b4b6bd;border:0"></div><div class="img" style="left:258.1px;top:329.5px;width:2.6px;height:4.3px;background:#b4b6bd;border:0"></div><div class="img" style="left:265.7px;top:329.5px;width:2.6px;height:4.3px;background:#b4b6bd;border:0"></div><div class="img" style="left:272.3px;top:327.8px;width:7.5px;height:7.8px;background:#7ba0e0;border:0"></div><div class="img" style="left:186.4px;top:343.9px;width:13.8px;height:13.8px;background:#5aaa78;border-radius:50%"></div><div class="img" style="left:189.0px;top:346.5px;width:8.6px;height:8.6px;background:#3f7fd0;border-radius:50%"></div><div class="img" style="left:204.5px;top:338.6px;width:66.7px;height:24.8px;background:#fff;border:1px solid #a9c6f5"></div><div class="img" style="left:205.6px;top:339.2px;width:59.2px;height:5.0px;background:#5b6fd0;border:0"></div><div class="img" style="left:205.6px;top:346.7px;width:40.9px;height:3.2px;background:#3a3c44;border:0"></div><div class="img" style="left:205.6px;top:351.9px;width:18.3px;height:3.4px;background:#55575f;border:0"></div><div class="img" style="left:206.7px;top:359.0px;width:43.1px;height:2.4px;background:#c5c6cb;border:0"></div><div class="img" style="left:211.0px;top:370.4px;width:137.8px;height:2.2px;background:#dfe0e3;border:0"></div><div class="img" style="left:183.0px;top:373.9px;width:171.2px;height:2.6px;background:#cfd0d4;border:0"></div><div class="img" style="left:183.0px;top:379.7px;width:171.2px;height:3.0px;background:#74767d;border:0"></div><div class="img" style="left:180.8px;top:391.5px;width:173.3px;height:1.7px;background:#cddc9e;border:0"></div><div class="img" style="left:181.9px;top:398.8px;width:10.8px;height:9.7px;background:#b9c272;border-radius:3px"></div><div class="img" style="left:199.1px;top:401.0px;width:52.7px;height:4.3px;background:#5570b0;border:0"></div><div class="img" style="left:181.9px;top:447.3px;width:10.8px;height:9.7px;background:#b9c272;border-radius:3px"></div><div class="img" style="left:199.1px;top:449.4px;width:39.8px;height:4.3px;background:#5570b0;border:0"></div><div class="img" style="left:187.3px;top:412.8px;width:31.2px;height:3.0px;background:#dcdde1;border:0"></div><div class="img" style="left:265.9px;top:412.8px;width:9.7px;height:3.0px;background:#dcdde1;border:0"></div><div class="img" style="left:280.9px;top:412.8px;width:9.7px;height:3.0px;background:#8a8c94;border:0"></div><div class="img" style="left:294.9px;top:412.8px;width:6.5px;height:3.0px;background:#6b6e78;border:0"></div><div class="img" style="left:318.6px;top:412.8px;width:8.6px;height:3.0px;background:#dcdde1;border:0"></div><div class="img" style="left:335.8px;top:412.8px;width:17.2px;height:3.0px;background:#e3e4e8;border:0"></div><div class="img" style="left:183.0px;top:418.0px;width:171.2px;height:0.4px;background:#ececef;border:0"></div><div class="img" style="left:186.2px;top:421.7px;width:47.4px;height:2.6px;background:#b4b6bd;border:0"></div><div class="img" style="left:265.9px;top:421.7px;width:40.9px;height:2.6px;background:#b4b6bd;border:0"></div><div class="img" style="left:183.0px;top:426.8px;width:171.2px;height:0.4px;background:#ececef;border:0"></div><div class="img" style="left:186.2px;top:432.0px;width:18.3px;height:2.6px;background:#b4b6bd;border:0"></div><div class="img" style="left:265.9px;top:432.0px;width:31.2px;height:2.6px;background:#b4b6bd;border:0"></div><div class="img" style="left:186.2px;top:461.7px;width:64.6px;height:2.4px;background:#c5c6cb;border:0"></div><div class="img" style="left:372.9px;top:326.7px;width:54.0px;height:137.4px;background:#f7f7f9;border-left:1px solid #e6e7ea"></div><div class="img" style="left:397.2px;top:328.2px;width:6.5px;height:2.6px;background:#b4b6bd;border:0"></div><div class="img" style="left:376.3px;top:336.0px;width:6.9px;height:2.2px;background:#c5c6cb;border:0"></div><div class="img" style="left:377.8px;top:342.4px;width:32.3px;height:5.0px;background:#fff;border:1px solid #dcdde1"></div><div class="img" style="left:380.0px;top:343.7px;width:11.8px;height:2.4px;background:#b4b6bd;border:0"></div><div class="img" style="left:380.0px;top:351.5px;width:25.8px;height:1.7px;background:#c5c6cb;border:0"></div><div class="img" style="left:380.0px;top:354.3px;width:25.8px;height:1.7px;background:#c5c6cb;border:0"></div><div class="img" style="left:409.0px;top:360.1px;width:8.6px;height:3.9px;background:#fff;border:1px solid #dcdde1"></div><div class="img" style="left:385.4px;top:369.3px;width:6.5px;height:2.2px;background:#d0d1d6;border:0"></div><div class="img" style="left:376.3px;top:373.6px;width:11.6px;height:8.6px;background:#d6e4fb;border:0"></div><div class="img" style="left:379.5px;top:376.2px;width:5.2px;height:3.7px;background:#6b6e78;border:0"></div><div class="img" style="left:391.4px;top:376.2px;width:5.2px;height:3.7px;background:#a5a7ae;border:0"></div><div class="img" style="left:404.3px;top:376.2px;width:5.2px;height:3.7px;background:#a5a7ae;border:0"></div><div class="img" style="left:416.1px;top:376.2px;width:5.2px;height:3.7px;background:#a5a7ae;border:0"></div><div class="img" style="left:376.3px;top:387.6px;width:6.9px;height:2.2px;background:#c5c6cb;border:0"></div><div class="img" style="left:376.7px;top:394.1px;width:6.9px;height:5.2px;background:#222;border-radius:50%"></div><div class="img" style="left:387.1px;top:394.1px;width:5.2px;height:5.2px;background:#2f7bf6;border-radius:50%"></div><div class="img" style="left:395.3px;top:394.1px;width:5.6px;height:5.2px;background:#e8453c;border-radius:50%"></div><div class="img" style="left:405.6px;top:394.1px;width:5.2px;height:5.2px;background:#f5a030;border-radius:50%"></div><div class="img" style="left:413.3px;top:394.1px;width:4.7px;height:5.2px;background:#4a4d58;border-radius:50%"></div><div class="img" style="left:418.9px;top:394.1px;width:4.3px;height:5.2px;background:#9ab878;border-radius:50%"></div><div class="img" style="left:377.8px;top:403.1px;width:28.0px;height:3.4px;background:#a8c6f8;border:0"></div><div class="img" style="left:411.2px;top:403.1px;width:5.4px;height:3.4px;background:#dcdde1;border:0"></div><div class="h2" style="left:78.7px;top:501.3px;">2) Edit Image</div><div class="p" style="left:101.8px;top:524.4px;width:418.1px;">Edit original images in PDFs by replacing, cropping, rotating, flipping and more, making your documents more visually appealing.</div><div class="nw" style="left:109.1px;top:571.3px;">1. Tap <a>Edit</a> on the toolbar;</div><div class="nw" style="left:109.1px;top:594.4px;">2. Click on an image and a properties panel will pop up on the right;</div><div class="nw" style="left:109.1px;top:617.4px;">3. In this panel, you can customize image <a>length</a>, <a>width</a>, <a>rotation angle</a>, <a>transparency</a>,</div><div class="nw" style="left:109.1px;top:640.4px;"><a>flip mode</a>, etc.</div></div></div>
<div class="num" style="left:1390.55px;margin-left:-.2px;top:574.7px;color:#3b3f4d">12</div>
<div class="cell" style="left:49.3px;top:636.7px"><div class="pg"><div class="hl">Quick Start Guide</div><svg class="hic" width="16" height="16" viewBox="0 0 16 16"><path d="M1 7.5h14M8 1v12" stroke="#e5322d" stroke-width="2.2" fill="none"/><path d="M8 7.5 2 3" stroke="#e5322d" stroke-width="1.5"/></svg><div class="hrr">PDF Reader Pro</div><div class="rule"></div><div class="pn">12</div><div class="img" style="left:166.0px;top:71.0px;width:263.1px;height:153.7px;background:#fff;border:1.5px solid #d5d6da"></div><div class="img" style="left:166.0px;top:71.0px;width:263.1px;height:18.4px;background:#eff0f2;border:0"></div><div class="img" style="left:203.6px;top:75.2px;width:87.7px;height:3.3px;background:#c9cacf;border:0"></div><div class="img" style="left:299.6px;top:75.2px;width:75.2px;height:3.3px;background:#9db9ee;border:0"></div><div class="img" style="left:216.1px;top:82.7px;width:167.1px;height:3.3px;background:#d5d6da;border:0"></div><div class="img" style="left:166.0px;top:89.4px;width:13.4px;height:135.3px;background:#f3f4f6;border:0"></div><div class="img" style="left:370.6px;top:89.4px;width:58.5px;height:135.3px;background:#f8f8fa;border:0;border-left:1px solid #e0e1e5"></div><div class="img" style="left:218.6px;top:95.2px;width:139.5px;height:77.7px;border:0;background:radial-gradient(ellipse 7% 7% at 30% 40%,#fff2d2 0,#f7cf9e 60%,rgba(247,207,158,0) 100%),radial-gradient(ellipse 16% 22% at 84% 88%,#0d0b14 0,#0d0b14 60%,rgba(13,11,20,0) 100%),radial-gradient(ellipse 6% 7% at 47% 67%,#1a1522 0,#1a1522 55%,rgba(26,21,34,0) 100%),radial-gradient(ellipse 7% 8% at 64% 66%,#1a1522 0,#1a1522 55%,rgba(26,21,34,0) 100%),radial-gradient(ellipse 5% 6% at 30% 68%,#2a2030 0,#2a2030 50%,rgba(42,32,48,0) 100%),linear-gradient(180deg,#8a678d 0%,#c08d9f 22%,#e3ad9b 35%,#f2c39d 42%,#8e6d86 47%,#7b5f7a 58%,#6b5170 70%,#4b3a58 84%,#1b1624 100%)"></div><div class="img" style="left:210.2px;top:182.9px;width:154.5px;height:2.5px;background:#8a8b90;border:0"></div><div class="img" style="left:210.2px;top:190.4px;width:154.5px;height:2.5px;background:#8a8b90;border:0"></div><div class="img" style="left:210.2px;top:198.0px;width:154.5px;height:2.5px;background:#8a8b90;border:0"></div><div class="img" style="left:210.2px;top:205.5px;width:154.5px;height:2.5px;background:#8a8b90;border:0"></div><div class="img" style="left:210.2px;top:213.0px;width:121.1px;height:2.5px;background:#8a8b90;border:0"></div><div class="img" style="left:379.0px;top:97.7px;width:41.8px;height:5.0px;background:#d5d6da;border:0"></div><div class="img" style="left:379.0px;top:118.6px;width:41.8px;height:5.0px;background:#d5d6da;border:0"></div><div class="img" style="left:376.5px;top:142.0px;width:31.7px;height:2.5px;background:#4b8df8;border:0"></div><div class="img" style="left:391.5px;top:154.5px;width:20.9px;height:18.4px;background:#fff;border:1px solid #d5d6da"></div><div class="nw" style="left:115.9px;top:243.1px;">4. Or click <a>Image</a>, select an area on a page for a new image to be inserted.</div><div class="p" style="left:115.9px;top:289.9px;width:396.8px;"><i>Note: You can quickly adjust the text properties in the floating layer. If you want to cancel, you can click <a>PDF Reader Pro</a> in the upper left corner, select <a>Settings</a> -&gt; <a>Page Display</a> -&gt; uncheck <a>Show the floating toolbar</a>.</i></div><div class="h2" style="left:79.9px;top:388.5px;">3) Align Multiple Text Boxes or Images</div><div class="p" style="left:95.0px;top:411.8px;width:426.0px;text-align:left;">PDF Reader Pro supports the alignment of multiple text boxes and images within PDFs. This update empowers to you seamlessly arrange and organize content with precision directly within the embedded documents.</div><div class="nw" style="left:95.0px;top:482.8px;"><b>Operation:</b></div><div class="nw" style="left:95.0px;top:506.2px;">1. Hold down <a>Command</a> to select multiple text boxes or images / <a>Slide the mouse</a> to</div><div class="nw" style="left:105.8px;top:529.6px;">select;</div><div class="nw" style="left:95.0px;top:553.0px;">2. Choose the alignment according to your needs.</div><div class="img" style="left:159.3px;top:579.7px;width:278.2px;height:186.3px;background:#fff;border:1.5px solid #d5d6da"></div><div class="img" style="left:159.3px;top:579.7px;width:278.2px;height:18.4px;background:#eff0f2;border:0"></div><div class="img" style="left:196.9px;top:583.9px;width:87.7px;height:3.3px;background:#c9cacf;border:0"></div><div class="img" style="left:292.9px;top:583.9px;width:75.2px;height:3.3px;background:#9db9ee;border:0"></div><div class="img" style="left:209.4px;top:591.4px;width:167.1px;height:3.3px;background:#d5d6da;border:0"></div><div class="img" style="left:159.3px;top:598.1px;width:13.4px;height:167.9px;background:#f3f4f6;border:0"></div><div class="img" style="left:379.0px;top:598.1px;width:58.5px;height:167.9px;background:#f8f8fa;border:0;border-left:1px solid #e0e1e5"></div><div class="img" style="left:214.4px;top:605.6px;width:149.5px;height:81.0px;border:0;background:radial-gradient(ellipse 7% 7% at 30% 40%,#fff2d2 0,#f7cf9e 60%,rgba(247,207,158,0) 100%),radial-gradient(ellipse 16% 22% at 84% 88%,#0d0b14 0,#0d0b14 60%,rgba(13,11,20,0) 100%),radial-gradient(ellipse 6% 7% at 47% 67%,#1a1522 0,#1a1522 55%,rgba(26,21,34,0) 100%),radial-gradient(ellipse 7% 8% at 64% 66%,#1a1522 0,#1a1522 55%,rgba(26,21,34,0) 100%),radial-gradient(ellipse 5% 6% at 30% 68%,#2a2030 0,#2a2030 50%,rgba(42,32,48,0) 100%),linear-gradient(180deg,#8a678d 0%,#c08d9f 22%,#e3ad9b 35%,#f2c39d 42%,#8e6d86 47%,#7b5f7a 58%,#6b5170 70%,#4b3a58 84%,#1b1624 100%)"></div><div class="img" style="left:379.0px;top:597.2px;width:54.3px;height:29.2px;background:none;border:2px solid #e0685e"></div><div class="img" style="left:206.1px;top:699.1px;width:162.0px;height:2.5px;background:#8a8b90;border:0"></div><div class="img" style="left:206.1px;top:706.7px;width:162.0px;height:2.5px;background:#8a8b90;border:0"></div><div class="img" style="left:206.1px;top:714.2px;width:162.0px;height:2.5px;background:#8a8b90;border:0"></div><div class="img" style="left:206.1px;top:721.7px;width:162.0px;height:2.5px;background:#8a8b90;border:0"></div><div class="img" style="left:206.1px;top:696.6px;width:162.0px;height:31.7px;background:none;border:1px solid #9bbcf0"></div></div></div>
<div class="cell" style="left:317.55px;top:636.7px"><div class="pg"><div class="hl">Quick Start Guide</div><svg class="hic" width="16" height="16" viewBox="0 0 16 16"><path d="M1 7.5h14M8 1v12" stroke="#e5322d" stroke-width="2.2" fill="none"/><path d="M8 7.5 2 3" stroke="#e5322d" stroke-width="1.5"/></svg><div class="hrr">PDF Reader Pro</div><div class="rule"></div><div class="pn">13</div><div class="h2" style="left:79.4px;top:71.9px;">4) Replace Text</div><div class="p" style="left:95.2px;top:95.3px;width:424.3px;text-align:left;">With the text replacement tool, you can quickly update the content in the PDF and correct errors.</div><div class="nw" style="left:95.2px;top:142.0px;">1. Click <a>Search</a> on the left side bar, tap <a>Replace</a>;</div><div class="nw" style="left:95.2px;top:165.4px;">2. Enter the text to be replaced and the new text, click <a>Replace</a> or <a>Replace All</a>.</div><div class="img" style="left:235.6px;top:191.3px;width:121.1px;height:116.9px;background:#f6f7f9;border:1.5px solid #dcdde1"></div><div class="img" style="left:237.2px;top:193.0px;width:117.8px;height:13.4px;background:#ececef;border:0"></div><div class="img" style="left:294.0px;top:197.1px;width:20.9px;height:5.0px;background:#999;border:0"></div><div class="img" style="left:325.8px;top:197.1px;width:25.1px;height:5.0px;background:#999;border:0"></div><div class="img" style="left:237.2px;top:206.3px;width:13.4px;height:100.2px;background:#e9ebef;border:0"></div><div class="img" style="left:252.3px;top:208.0px;width:13.4px;height:11.7px;background:none;border:2px solid #e0685e;border-radius:4px"></div><div class="img" style="left:239.7px;top:209.7px;width:8.4px;height:8.4px;background:#555;border:0"></div><div class="img" style="left:239.7px;top:227.2px;width:7.5px;height:6.7px;background:#888;border:0"></div><div class="img" style="left:239.7px;top:243.9px;width:7.5px;height:6.7px;background:#888;border:0"></div><div class="img" style="left:239.7px;top:260.6px;width:7.5px;height:6.7px;background:#888;border:0"></div><div class="img" style="left:239.7px;top:277.3px;width:7.5px;height:6.7px;background:#888;border:0"></div><div class="img" style="left:256.4px;top:227.2px;width:29.2px;height:4.2px;background:#bbb;border:0"></div><div class="img" style="left:285.7px;top:240.6px;width:26.7px;height:5.8px;background:#ddd;border:0"></div><div class="img" style="left:317.4px;top:238.9px;width:26.7px;height:9.2px;background:#2f7bf6;border:0;border-radius:2px"></div><div class="img" style="left:256.4px;top:254.8px;width:29.2px;height:3.3px;background:#ccc;border:0"></div><div class="img" style="left:262.3px;top:269.0px;width:27.6px;height:4.2px;background:#aaa;border:0"></div><div class="img" style="left:258.9px;top:281.5px;width:82.7px;height:16.7px;background:#dbe7fb;border:0"></div><div class="img" style="left:262.3px;top:284.8px;width:73.5px;height:2.5px;background:#8aa5d8;border:0"></div><div class="img" style="left:262.3px;top:291.5px;width:61.0px;height:2.5px;background:#8aa5d8;border:0"></div><div class="h2" style="left:79.4px;top:342.5px;">5) Watermark</div><div class="p" style="left:95.2px;top:365.9px;width:426.0px;">Add and delete watermark on PDFs. You can change the opacity, color and positions of the watermark. Customize watermark with texts and images:</div><div class="nw" style="left:116.9px;top:419.4px;">1.</div><div class="p" style="left:131.1px;top:419.4px;width:390.1px;">Click <a>Edit</a> on the toolbar and tap <a>Watermark</a> <span class="s icd"></span> -&gt; <a>Add Watermark</a>;</div><div class="nw" style="left:116.9px;top:443.6px;text-align:left;">2.</div><div class="p" style="left:131.1px;top:443.6px;width:390.1px;text-align:left;">Set and customize text and images watermark. You can change the opacity, color and positions of the watermark;</div><div class="nw" style="left:116.9px;top:490.4px;">3.</div><div class="p" style="left:131.1px;top:490.4px;width:390.1px;">Click <a>Save as Template</a> if needed;</div><div class="nw" style="left:116.9px;top:514.6px;">4.</div><div class="p" style="left:131.1px;top:514.6px;width:390.1px;">Click <a>Apply</a> to apply the watermark to your PDF.</div><div class="h2" style="left:79.4px;top:558.9px;">6)&nbsp; Header, Footer and Page Number</div><div class="nw" style="left:95.2px;top:582.2px;">Want to set header and footer with certain texts? Just do as the following steps:</div><div class="nw" style="left:116.9px;top:605.6px;">1.</div><div class="p" style="left:131.1px;top:605.6px;width:390.1px;">Tap <a>Edit</a> on the toolbar and select <a>Header &amp; Footer</a> -&gt; <a>Add Header &amp; Footer</a>;</div><div class="nw" style="left:116.9px;top:629.9px;">2.</div><div class="p" style="left:131.1px;top:629.9px;width:390.1px;">Here you can choose add Date/Page or customized contents;</div><div class="nw" style="left:139.5px;top:652.4px;"><span class="s" style="font-size:14px">&#9679;</span></div><div class="p" style="left:157.9px;top:652.4px;width:363.4px;">Add Date/Page</div><div class="nw" style="left:157.9px;top:675.8px;">- Choose <a>Display Mode</a> and <a>Start Page Number</a>;</div><div class="nw" style="left:157.9px;top:699.2px;">- Select a place to put the header&amp;footer;</div><div class="nw" style="left:157.9px;top:722.6px;">- Enter text in the blank field.</div></div></div>
<div class="cell" style="left:585.8px;top:636.7px"><div class="pg"><div class="hl">Quick Start Guide</div><svg class="hic" width="16" height="16" viewBox="0 0 16 16"><path d="M1 7.5h14M8 1v12" stroke="#e5322d" stroke-width="2.2" fill="none"/><path d="M8 7.5 2 3" stroke="#e5322d" stroke-width="1.5"/></svg><div class="hrr">PDF Reader Pro</div><div class="rule"></div><div class="pn">14</div><div class="nw" style="left:156.9px;top:71.9px;">- Select a place to put the header&amp;footer;</div><div class="nw" style="left:156.9px;top:95.3px;">- Enter text in the blank field.</div><div class="img" style="left:140.2px;top:120.3px;width:271.5px;height:148.7px;background:#dcdde0;border:1.5px solid #cfd0d4"></div><div class="img" style="left:140.2px;top:120.3px;width:271.5px;height:10.9px;background:#eff0f2;border:0"></div><div class="img" style="left:146.0px;top:123.6px;width:45.9px;height:3.3px;background:#aaa;border:0"></div><div class="img" style="left:204.5px;top:131.1px;width:101.9px;height:137.8px;background:#fff;border:0"></div><div class="img" style="left:210.3px;top:139.5px;width:8.4px;height:10.0px;background:#3f8f7a;border:0;border-radius:50%"></div><div class="img" style="left:223.7px;top:138.7px;width:28.4px;height:3.3px;background:#555;border:0"></div><div class="img" style="left:223.7px;top:144.5px;width:22.6px;height:2.5px;background:#999;border:0"></div><div class="img" style="left:208.7px;top:156.2px;width:91.9px;height:2.5px;background:#cfd0d4;border:0"></div><div class="img" style="left:208.7px;top:162.9px;width:91.9px;height:2.5px;background:#d6e3a8;border:0"></div><div class="img" style="left:208.7px;top:170.4px;width:35.1px;height:3.3px;background:#8fb36a;border:0"></div><div class="img" style="left:254.6px;top:177.1px;width:16.7px;height:2.5px;background:#bbb;border:0"></div><div class="img" style="left:279.7px;top:177.1px;width:20.9px;height:2.5px;background:#bbb;border:0"></div><div class="img" style="left:210.3px;top:182.9px;width:31.7px;height:2.5px;background:#cfd0d4;border:0"></div><div class="img" style="left:208.7px;top:198.0px;width:10.0px;height:4.2px;background:#8aa5d8;border:0"></div><div class="img" style="left:221.2px;top:211.3px;width:14.2px;height:2.5px;background:#cfd0d4;border:0"></div><div class="img" style="left:217.0px;top:218.8px;width:43.4px;height:2.5px;background:#dcdde0;border:0"></div><div class="img" style="left:208.7px;top:231.4px;width:25.1px;height:2.5px;background:#bbb;border:0"></div><div class="img" style="left:254.6px;top:231.4px;width:30.9px;height:2.5px;background:#cfd0d4;border:0"></div><div class="img" style="left:359.0px;top:131.1px;width:52.6px;height:137.8px;background:#f8f8fa;border:0"></div><div class="img" style="left:363.2px;top:143.7px;width:16.7px;height:3.3px;background:#999;border:0"></div><div class="img" style="left:396.6px;top:152.9px;width:6.7px;height:6.7px;background:#333;border:0"></div><div class="img" style="left:363.2px;top:168.7px;width:25.1px;height:3.3px;background:#bbb;border:0"></div><div class="img" style="left:363.2px;top:177.1px;width:19.2px;height:3.3px;background:#ccc;border:0"></div><div class="img" style="left:359.0px;top:187.9px;width:51.8px;height:20.0px;background:none;border:2px solid #e0685e"></div><div class="img" style="left:363.2px;top:192.1px;width:20.9px;height:3.3px;background:#bbb;border:0"></div><div class="img" style="left:363.2px;top:213.0px;width:25.1px;height:3.3px;background:#ccc;border:0"></div><div class="img" style="left:400.8px;top:218.0px;width:8.4px;height:5.0px;background:#e03a30;border:0"></div><div class="img" style="left:378.2px;top:223.9px;width:15.9px;height:7.5px;background:#2f7bf6;border:0"></div><div class="img" style="left:371.5px;top:258.1px;width:29.2px;height:2.5px;background:#ccc;border:0"></div><div class="img" style="left:413.3px;top:192.1px;width:8.4px;height:0.8px;background:#8db4f2;border:0"></div><div class="nw" style="left:424.2px;top:178.0px;font-size:5.5px;color:#888;-webkit-text-stroke:0;">Add Text and / or Date/Page</div><div class="img" style="left:413.3px;top:218.8px;width:8.4px;height:0.8px;background:#8db4f2;border:0"></div><div class="nw" style="left:424.2px;top:204.7px;font-size:5.5px;color:#888;-webkit-text-stroke:0;">Insert / Date/Page</div><div class="img" style="left:413.3px;top:239.7px;width:8.4px;height:0.8px;background:#8db4f2;border:0"></div><div class="nw" style="left:424.2px;top:225.6px;font-size:5.5px;color:#888;-webkit-text-stroke:0;">Page layer area</div><div class="h2" style="left:79.2px;top:304.1px;">7)&nbsp; Background</div><div class="p" style="left:105.9px;top:327.5px;width:318.2px;">Changing the background of the PDFs will comfort your eyes after long time reading:</div><div class="nw" style="left:116.8px;top:373.4px;">1.</div><div class="p" style="left:131.0px;top:373.4px;width:293.2px;">Tap <a>Edit</a> on the toolbar</div><div class="nw" style="left:116.8px;top:403.5px;white-space:nowrap;">2.</div><div class="p" style="left:131.0px;top:403.5px;width:293.2px;white-space:nowrap;">Choose <a>Background</a> <span class="s icd"></span> -&gt; <a>Add Background</a>.&nbsp; Then you can</div><div class="nw" style="left:131.0px;top:428.6px;">add color or images background to the PDFs, and set</div><div class="nw" style="left:131.0px;top:451.9px;">source, rotation, position and page range of the background;</div><div class="nw" style="left:116.8px;top:475.3px;">3.</div><div class="p" style="left:131.0px;top:475.3px;width:293.2px;">Click <a>Save as Template</a> if needed;</div><div class="nw" style="left:116.8px;top:498.7px;">4.</div><div class="p" style="left:131.0px;top:498.7px;width:293.2px;">Click <a>Apply</a> to apply the watermark to your PDF.</div><div class="img" style="left:434.2px;top:329.9px;width:71.0px;height:195.5px;background:#fafafc;border:1.5px solid #d9dade"></div><div class="img" style="left:450.9px;top:336.6px;width:37.6px;height:2.5px;background:#bbb;border:0"></div><div class="img" style="left:440.9px;top:349.2px;width:26.7px;height:3.3px;background:#6aa0f0;border:0"></div><div class="img" style="left:484.3px;top:348.3px;width:5.0px;height:5.0px;background:#aaa;border:0"></div><div class="img" style="left:440.9px;top:360.8px;width:6.7px;height:4.2px;background:#2563eb;border:0"></div><div class="img" style="left:440.9px;top:369.2px;width:6.7px;height:6.7px;background:#f0f0f0;border:0;border-radius:50%"></div><div class="img" style="left:452.6px;top:369.2px;width:6.7px;height:6.7px;background:#f7e7b4;border:0;border-radius:50%"></div><div class="img" style="left:464.3px;top:369.2px;width:6.7px;height:6.7px;background:#cfe8cf;border:0;border-radius:50%"></div><div class="img" style="left:476.0px;top:369.2px;width:6.7px;height:6.7px;background:#ddd;border:0;border-radius:50%"></div><div class="img" style="left:487.6px;top:369.2px;width:6.7px;height:6.7px;background:#f7d070;border:0;border-radius:50%"></div><div class="img" style="left:440.9px;top:384.2px;width:22.6px;height:2.5px;background:#888;border:0"></div><div class="img" style="left:440.9px;top:392.6px;width:20.0px;height:6.7px;background:#fff;border:1px solid #d5d6da"></div><div class="img" style="left:471.8px;top:392.6px;width:27.6px;height:6.7px;background:#fff;border:1px solid #d5d6da"></div><div class="img" style="left:440.9px;top:403.4px;width:20.0px;height:6.7px;background:#fff;border:1px solid #d5d6da"></div><div class="img" style="left:440.9px;top:415.1px;width:58.5px;height:5.0px;background:#eee;border:0"></div><div class="img" style="left:440.9px;top:428.5px;width:22.6px;height:2.5px;background:#888;border:0"></div><div class="img" style="left:439.2px;top:435.2px;width:60.1px;height:21.7px;background:#fff;border:1px solid #e0e1e5"></div><div class="img" style="left:445.0px;top:440.2px;width:8.4px;height:8.4px;background:#2563eb;border:0;border-radius:50%"></div><div class="img" style="left:471.8px;top:437.7px;width:25.1px;height:5.0px;background:#f0f0f2;border:0"></div><div class="img" style="left:471.8px;top:446.9px;width:25.1px;height:5.0px;background:#f0f0f2;border:0"></div><div class="img" style="left:449.2px;top:512.9px;width:39.3px;height:4.2px;background:#999;border:0"></div><div class="h2" style="left:79.2px;top:543.8px;">8) Bates Numbers</div><div class="nw" style="left:105.9px;top:567.2px;">Identify and retrieve information from your legal documents, you might do like this:</div><div class="nw" style="left:116.8px;top:596.4px;">1.</div><div class="p" style="left:131.0px;top:596.4px;width:371.7px;">Tap <a>Edit</a> on the toolbar -&gt; <a>Bates Numbers</a> <span class="s icd"></span> -&gt; <a>Add Bates Numbers</a>;</div><div class="nw" style="left:116.8px;top:621.5px;text-align:left;">2.</div><div class="p" style="left:131.0px;top:621.5px;width:371.7px;text-align:left;">Add a unique prefix or suffix which can be a set number, case number, firm name or date;</div><div class="nw" style="left:116.8px;top:667.4px;">3.</div><div class="p" style="left:131.0px;top:667.4px;width:371.7px;">Click <a>Save as Template</a> if needed;</div><div class="nw" style="left:116.8px;top:691.7px;">4.</div><div class="p" style="left:131.0px;top:691.7px;width:371.7px;">Click <a>Apply</a> to apply the watermark to your PDF.</div></div></div>
<div class="cell" style="left:854.05px;top:636.7px"><div class="pg"><div class="hl">Quick Start Guide</div><svg class="hic" width="16" height="16" viewBox="0 0 16 16"><path d="M1 7.5h14M8 1v12" stroke="#e5322d" stroke-width="2.2" fill="none"/><path d="M8 7.5 2 3" stroke="#e5322d" stroke-width="1.5"/></svg><div class="hrr">PDF Reader Pro</div><div class="rule"></div><div class="pn">15</div><div class="h2" style="left:77.3px;top:71.9px;">9)&nbsp; Crop</div><div class="p" style="left:104.1px;top:95.3px;width:401.8px;text-align:left;">Annoyed when reading too many contents? Cropping what you want to view frees yourself. Cropping a PDF hides some of the PDF's content rather than removing it.</div><div class="nw" style="left:114.9px;top:142.0px;font-size:9.5px;">1.</div><div class="p" style="left:129.1px;top:142.0px;width:376.7px;font-size:9.5px;">Click <a>Edit</a> on the toolbar -&gt; <a>Crop</a>;</div><div class="nw" style="left:114.9px;top:161.3px;font-size:9.5px;">2.</div><div class="p" style="left:129.1px;top:161.3px;width:376.7px;font-size:9.5px;">Box the cropping area and choose the page range, then click <a>Apply</a>;</div><div class="nw" style="left:114.9px;top:180.5px;font-size:9.5px;">3.</div><div class="p" style="left:129.1px;top:180.5px;width:376.7px;font-size:9.5px;">Or you can crop pages with one click through <a>Auto Crop</a> mode:</div><div class="nw" style="left:131.6px;top:203.9px;font-size:9.5px;">- <a>Content-based Crop</a>: Crop to fit the white space for each page.</div><div class="nw" style="left:131.6px;top:227.2px;font-size:9.5px;">- <a>Ratio Fixed Crop</a>: Uniform crop ratio for all pages.</div></div></div>
<div class="cell" style="left:1122.3px;top:636.7px"><div class="pg"><div class="hl">Quick Start Guide</div><svg class="hic" width="16" height="16" viewBox="0 0 16 16"><path d="M1 7.5h14M8 1v12" stroke="#e5322d" stroke-width="2.2" fill="none"/><path d="M8 7.5 2 3" stroke="#e5322d" stroke-width="1.5"/></svg><div class="hrr">PDF Reader Pro</div><div class="rule"></div><div class="pn">16</div><div class="h1" style="top:74.7px">5.&nbsp; Advanced Editing Tools</div><div class="h2" style="left:79.6px;top:113.6px;">1) Page Edit</div><div class="p" style="left:104.7px;top:137.0px;width:421.8px;text-align:left;">Want to extract pages from the PDF file? Or need to split files into two or more PDFs? Page Edit provides tools to edit pages in different ways.</div><div class="nw" style="left:115.5px;top:189.7px;">1.</div><div class="p" style="left:129.7px;top:189.7px;width:390.9px;">Tap <a>Page Edit</a> <span class="s icg"></span> at the upper left corner;</div><div class="img" style="left:129.7px;top:213.0px;width:388.4px;height:30.9px;background:#f1f2f4;border:1px solid #dcdde1"></div><div class="img" style="left:131.4px;top:215.5px;width:16.7px;height:17.5px;background:none;border:2px solid #e0685e;border-radius:50%"></div><div class="img" style="left:154.8px;top:219.7px;width:66.8px;height:3.3px;background:#d5d6da;border:0"></div><div class="img" style="left:288.4px;top:219.7px;width:158.7px;height:3.3px;background:#c9cacf;border:0"></div><div class="img" style="left:238.3px;top:231.4px;width:37.6px;height:8.4px;background:#fff;border:0"></div><div class="img" style="left:288.4px;top:233.0px;width:158.7px;height:5.0px;background:#bdbec2;border:0"></div><div class="img" style="left:459.7px;top:233.0px;width:37.6px;height:5.0px;background:#999;border:0"></div><div class="nw" style="left:115.5px;top:247.3px;">2.</div><div class="p" style="left:129.7px;top:247.3px;width:390.9px;">Long tap command and tick more pages, then you can <b>Reorder, Insert, Replace, Extract, Split, Rotate, Reverse, Copy</b> or <b>Delete</b> these pages;</div><div class="nw" style="left:115.5px;top:294.9px;">3.</div><div class="p" style="left:129.7px;top:294.9px;width:390.9px;">Also you can directly drag files into the current one or drag pages out of the window to create a new PDF.</div><div class="h2" style="left:79.6px;top:361.7px;">2) Merge</div><div class="nw" style="left:104.7px;top:385.1px;">To merge the currently opened PDF with another PDF:</div><div class="nw" style="left:115.5px;top:414.4px;">1.</div><div class="p" style="left:129.7px;top:414.4px;width:390.9px;">Click <a>Tools</a> on the toolbar -&gt; Merge <span class="s ico"></span>;</div><div class="nw" style="left:115.5px;top:437.7px;">2.</div><div class="p" style="left:129.7px;top:437.7px;width:390.9px;">Or click <a>Files</a> on the main menu -&gt; <a>Merge PDF Files</a>;</div><div class="nw" style="left:115.5px;top:461.1px;">3.</div><div class="p" style="left:129.7px;top:461.1px;width:390.9px;">Hold <a>command</a> (&#8984;) and select multiple files you want to merge.</div><div class="h2" style="left:79.6px;top:507.1px;">3) Compress</div><div class="p" style="left:104.7px;top:530.5px;width:421.8px;text-align:left;">If you need to email your thesis with lots of diagrams, tables, images and tons of text pages with the very limited size of the email, compressing your PDF file is easiest and simplest way to solve this problem:</div><div class="nw" style="left:115.5px;top:608.1px;">1.</div><div class="p" style="left:129.7px;top:608.1px;width:390.9px;">Click <a>Tools</a> on the toolbar -&gt; <a>Compress</a> <span class="s icd"></span> -&gt; <a>Compress</a>;</div><div class="nw" style="left:115.5px;top:631.5px;">2.</div><div class="p" style="left:129.7px;top:631.5px;width:390.9px;">Or click main menu <a>Files</a> -&gt; <a>Compress</a>.</div><div class="nw" style="left:115.5px;top:655.8px;">3.</div><div class="p" style="left:129.7px;top:655.8px;width:390.9px;">Select the quality of the compressed file, you can choose <a>Standard</a> quality, <a>Mobile</a> suitable quality or <a>Customize</a> compression parameters;</div><div class="nw" style="left:115.5px;top:703.4px;">4.</div><div class="p" style="left:129.7px;top:703.4px;width:390.9px;">&nbsp;Click <a>Compress</a> to save it as a new PDF.</div></div></div>
<div class="cell" style="left:1390.55px;top:636.7px"><div class="pg"><div class="hl">Quick Start Guide</div><svg class="hic" width="16" height="16" viewBox="0 0 16 16"><path d="M1 7.5h14M8 1v12" stroke="#e5322d" stroke-width="2.2" fill="none"/><path d="M8 7.5 2 3" stroke="#e5322d" stroke-width="1.5"/></svg><div class="hrr">PDF Reader Pro</div><div class="rule"></div><div class="pn">17</div><div class="h2" style="left:78.5px;top:71.9px;">4) Compare</div><div class="p" style="left:105.2px;top:95.3px;width:416.0px;">Our tool enables users to quickly compare two files and mark any differences. The results can be conveniently downloaded for reference.</div><div class="nw" style="left:105.2px;top:165.4px;"><b>Compare PDFs via a Side-by-Side View</b></div><div class="nw" style="left:116.1px;top:195.5px;">1.</div><div class="p" style="left:130.3px;top:195.5px;width:388.4px;">Click <a>Tools</a> on the toolbar -&gt; <a>Compare</a> <span class="s ico"></span> -&gt; <a>Side-by-Side View</a>;</div><div class="nw" style="left:116.1px;top:220.6px;">2.</div><div class="p" style="left:130.3px;top:220.6px;width:388.4px;">Import your PDF documents and set <a>Page Range</a>;</div><div class="nw" style="left:116.1px;top:243.1px;">3.</div><div class="p" style="left:130.3px;top:243.1px;width:388.4px;">Choose <a>Compare text</a> or <a>Compare image</a>, or both of them -&gt; <a>Compare</a>;</div><div class="nw" style="left:130.3px;top:266.5px;">(The changes will be marked by highlight bars. You can customize the color of</div><div class="nw" style="left:130.3px;top:289.9px;">the highlights by clicking Settings.)</div><div class="nw" style="left:116.1px;top:313.3px;">4.</div><div class="p" style="left:130.3px;top:313.3px;width:388.4px;">Save as <a>Old Document</a> or <a>New Document</a> or <a>Merge into a New File</a>.</div><div class="nw" style="left:105.2px;top:360.1px;"><b>Compare by File Overlay</b></div><div class="nw" style="left:119.4px;top:383.4px;">1. Click <a>Tools</a> on the toolbar -&gt; <a>Compare</a> -&gt; <a>Compare by File Overlay</a>;</div><div class="nw" style="left:119.4px;top:406.8px;">2. Import your PDF documents and customize settings like <a>Page Range</a>,</div><div class="nw" style="left:130.3px;top:430.2px;"><a>Document Opacity</a>, <a>Blend Mode</a>, etc;</div><div class="nw" style="left:119.4px;top:453.6px;">3. Click <a>Compare</a> and these two files will be overlaid together for comparison;</div><div class="nw" style="left:119.4px;top:477.0px;">4. Tap <a>Save</a> to export the result.</div><div class="h2" style="left:78.5px;top:522.1px;">5) Outline</div><div class="p" style="left:105.2px;top:545.5px;width:416.0px;">A digital map guides you to the specific contents through a cluster of pages. You can search outline by inputting text and result list will show. A custom setting lets you create your own outline.</div><div class="nw" style="left:116.1px;top:615.7px;text-align:left;">1.</div><div class="p" style="left:130.3px;top:615.7px;width:250.6px;text-align:left;">Click Outline on the left side bar, then click <a>+</a> to add an outline for the current page;</div><div class="nw" style="left:116.1px;top:661.6px;text-align:left;">2.</div><div class="p" style="left:130.3px;top:661.6px;width:250.6px;text-align:left;">Or select text within a PDF, then right-click and choose Add Outline Item, the selected text will automatically be the title of the outline</div><div class="img" style="left:393.4px;top:628.1px;width:131.1px;height:137.8px;background:#f6f7f9;border:1.5px solid #dcdde1"></div><div class="img" style="left:395.1px;top:629.8px;width:15.0px;height:134.5px;background:#eceef2;border:0"></div><div class="img" style="left:418.5px;top:640.7px;width:29.2px;height:4.2px;background:#888;border:0"></div><div class="img" style="left:483.6px;top:639.0px;width:6.7px;height:6.7px;background:#999;border:0"></div><div class="img" style="left:497.8px;top:639.0px;width:6.7px;height:6.7px;background:#999;border:0"></div><div class="img" style="left:414.3px;top:654.9px;width:100.2px;height:15.0px;background:#d6e4fb;border:0"></div><div class="img" style="left:433.5px;top:659.9px;width:22.6px;height:4.2px;background:#6aa0f0;border:0"></div><div class="img" style="left:395.9px;top:672.4px;width:14.2px;height:15.0px;background:#555;border:0"></div><div class="img" style="left:414.3px;top:672.4px;width:72.7px;height:91.9px;background:#fff;border:1px solid #dcdde1"></div><div class="img" style="left:420.2px;top:678.3px;width:20.9px;height:3.3px;background:#aaa;border:0"></div><div class="img" style="left:420.2px;top:693.3px;width:52.6px;height:3.3px;background:#bbb;border:0"></div><div class="img" style="left:420.2px;top:708.3px;width:10.9px;height:3.3px;background:#bbb;border:0"></div><div class="img" style="left:420.2px;top:725.0px;width:44.3px;height:3.3px;background:#bbb;border:0"></div><div class="img" style="left:399.3px;top:639.0px;width:6.7px;height:6.7px;background:#999;border:0"></div><div class="img" style="left:399.3px;top:657.4px;width:6.7px;height:6.7px;background:#999;border:0"></div><div class="img" style="left:399.3px;top:695.0px;width:6.7px;height:6.7px;background:#999;border:0"></div><div class="img" style="left:399.3px;top:714.2px;width:6.7px;height:6.7px;background:#999;border:0"></div></div></div>
</div>
</div>
</body></html>
